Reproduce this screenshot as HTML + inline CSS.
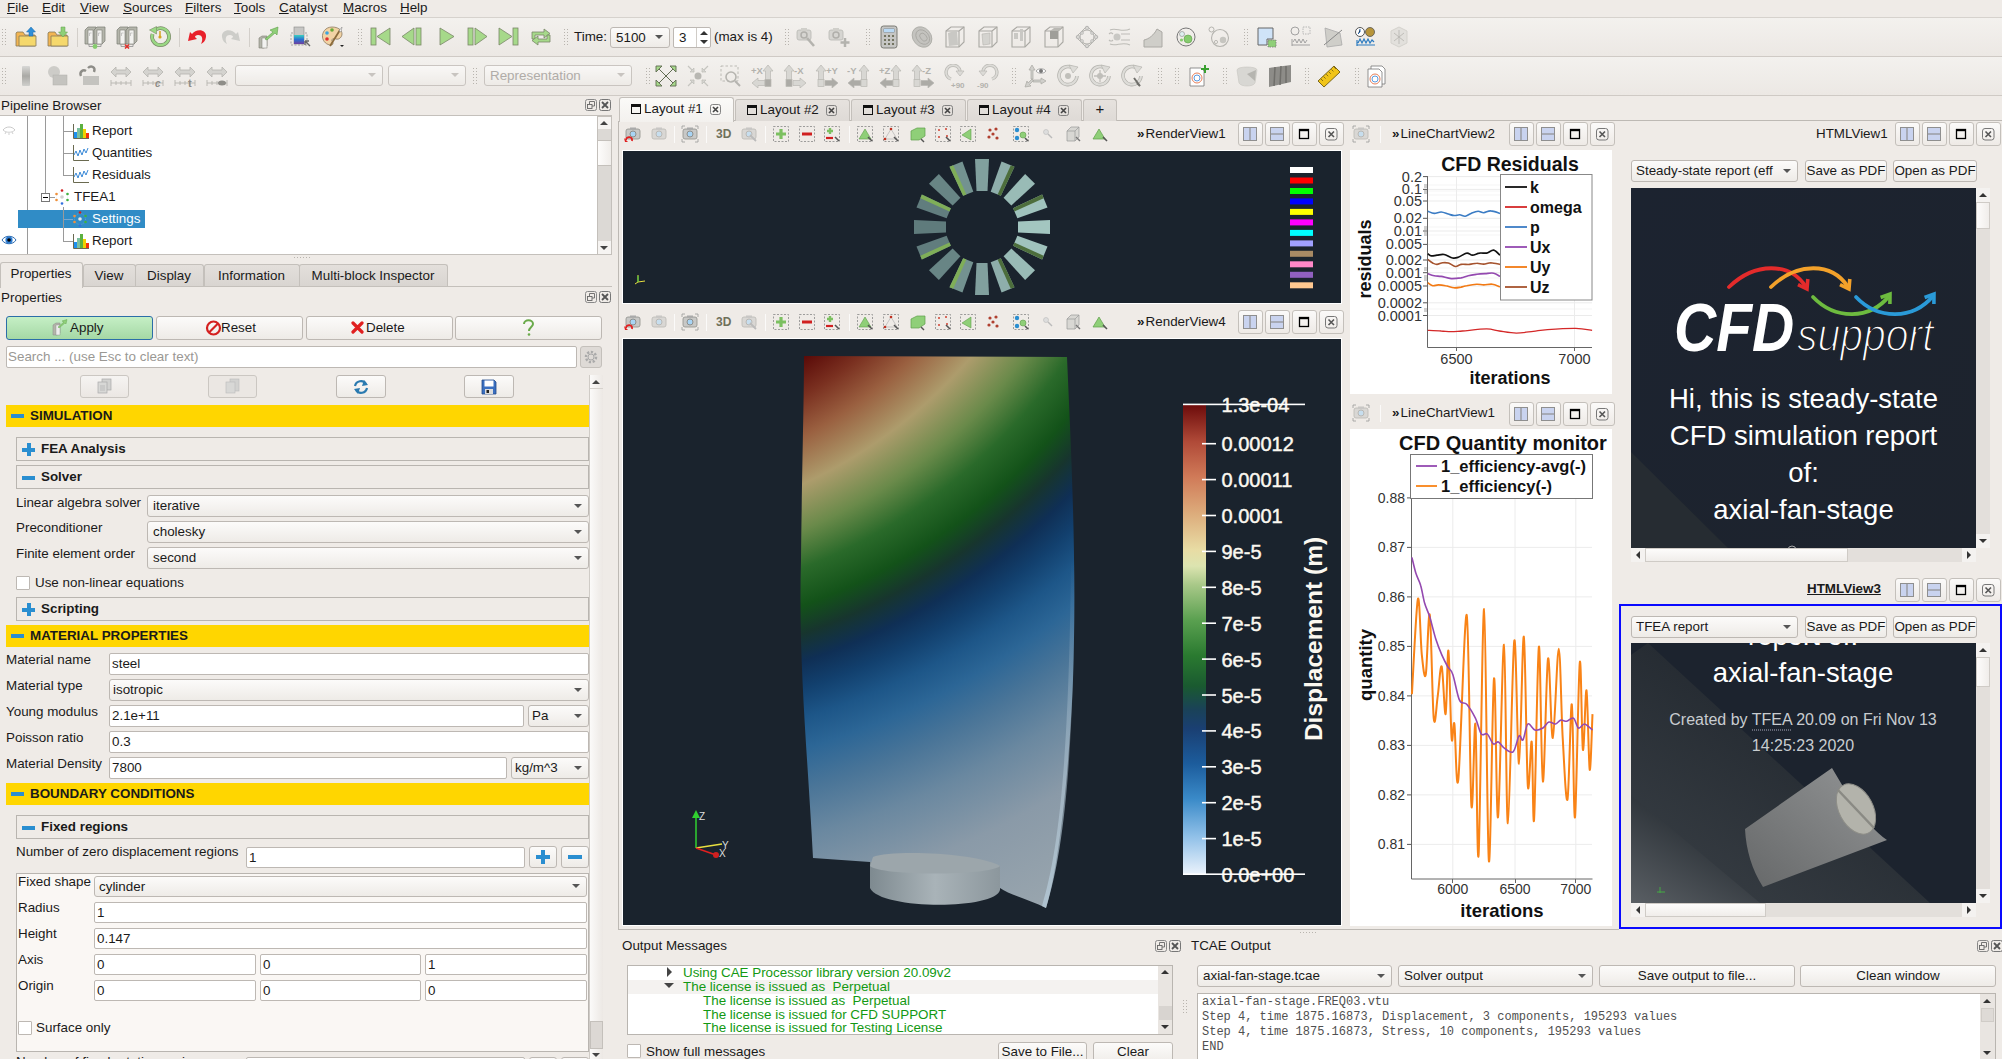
<!DOCTYPE html>
<html><head><meta charset="utf-8"><style>
html,body{margin:0;padding:0;}
body{width:2002px;height:1059px;overflow:hidden;position:relative;background:#efebe7;font-family:"Liberation Sans",sans-serif;color:#1a1a1a;}
body>div,body>svg{position:absolute;box-sizing:content-box;}
.t{white-space:pre;font-size:13.4px;}
.btn{border:1px solid #bdb8b3;border-radius:3px;background:linear-gradient(#fcfbfa,#eeebe7);}
.inp{border:1px solid #bdb8b3;border-radius:2px;background:#fff;}
u{text-decoration:underline;text-underline-offset:1px;}
</style></head><body>
<svg width="0" height="0" style="position:absolute"><defs>
<linearGradient id="cmg" x1="0" y1="0" x2="0" y2="1"><stop offset="0" stop-color="#3ad0c0"/><stop offset="0.5" stop-color="#2a70d0"/><stop offset="1" stop-color="#7040a0"/></linearGradient>
<linearGradient id="gbar" x1="0" y1="0" x2="0" y2="1"><stop offset="0" stop-color="#d8d8d6"/><stop offset="0.5" stop-color="#aaa9a5"/><stop offset="1" stop-color="#cfcfcc"/></linearGradient>
</defs></svg>
<div class="t" style="left:7px;top:0px;height:16px;line-height:16px;font-size:13.4px"><u>F</u>ile</div>
<div class="t" style="left:42px;top:0px;height:16px;line-height:16px;font-size:13.4px"><u>E</u>dit</div>
<div class="t" style="left:80px;top:0px;height:16px;line-height:16px;font-size:13.4px"><u>V</u>iew</div>
<div class="t" style="left:123px;top:0px;height:16px;line-height:16px;font-size:13.4px"><u>S</u>ources</div>
<div class="t" style="left:185px;top:0px;height:16px;line-height:16px;font-size:13.4px"><u>F</u>ilters</div>
<div class="t" style="left:234px;top:0px;height:16px;line-height:16px;font-size:13.4px"><u>T</u>ools</div>
<div class="t" style="left:279px;top:0px;height:16px;line-height:16px;font-size:13.4px"><u>C</u>atalyst</div>
<div class="t" style="left:343px;top:0px;height:16px;line-height:16px;font-size:13.4px"><u>M</u>acros</div>
<div class="t" style="left:400px;top:0px;height:16px;line-height:16px;font-size:13.4px"><u>H</u>elp</div>
<div style="left:0px;top:17px;width:2002px;height:1px;background:#d6d2cd"></div>
<div style="left:0px;top:56px;width:2002px;height:1px;background:#cfcac5"></div>
<div style="left:0px;top:95px;width:2002px;height:1px;background:#cfcac5"></div>
<div style="left:0px;top:18px;width:2002px;height:38px;background:linear-gradient(#f3f1ee,#ece8e4)"></div>
<div style="left:0px;top:57px;width:2002px;height:38px;background:linear-gradient(#f3f1ee,#ece8e4)"></div>
<div style="left:2px;top:29px;width:1px;height:1px;background:#b8b4ae"></div>
<div style="left:5px;top:29px;width:1px;height:1px;background:#b8b4ae"></div>
<div style="left:2px;top:32px;width:1px;height:1px;background:#b8b4ae"></div>
<div style="left:5px;top:32px;width:1px;height:1px;background:#b8b4ae"></div>
<div style="left:2px;top:35px;width:1px;height:1px;background:#b8b4ae"></div>
<div style="left:5px;top:35px;width:1px;height:1px;background:#b8b4ae"></div>
<div style="left:2px;top:38px;width:1px;height:1px;background:#b8b4ae"></div>
<div style="left:5px;top:38px;width:1px;height:1px;background:#b8b4ae"></div>
<div style="left:2px;top:41px;width:1px;height:1px;background:#b8b4ae"></div>
<div style="left:5px;top:41px;width:1px;height:1px;background:#b8b4ae"></div>
<div style="left:2px;top:44px;width:1px;height:1px;background:#b8b4ae"></div>
<div style="left:5px;top:44px;width:1px;height:1px;background:#b8b4ae"></div>
<svg style="left:14px;top:25px;" width="24" height="24" viewBox="0 0 24 24"><path d="M2 8 L2 21 L21 21 L21 10 L11 10 L9 7 L3 7 Z" fill="#f2b552" stroke="#857a5a" stroke-width="0.8"/><path d="M5 11 L22 11 L22 21 L5 21 Z" fill="#f5d86c" stroke="#857a5a" stroke-width="0.8"/><path d="M17 2 L21.5 7 L19 7 L19 11 L15 11 L15 7 L12.5 7 Z" fill="#2f8fd8" stroke="#1f6aa8" stroke-width="0.5"/></svg>
<svg style="left:46px;top:25px;" width="24" height="24" viewBox="0 0 24 24"><path d="M2 8 L2 21 L21 21 L21 10 L11 10 L9 7 L3 7 Z" fill="#f2b552" stroke="#857a5a" stroke-width="0.8"/><path d="M5 11 L22 11 L22 21 L5 21 Z" fill="#f5d86c" stroke="#857a5a" stroke-width="0.8"/><path d="M15 2 L19 2 L19 7 L21.5 7 L17 12 L12.5 7 L15 7 Z" fill="#8fcf78" stroke="#5e9e4a" stroke-width="0.5"/></svg>
<div style="left:77px;top:28px;width:1px;height:19px;background:#d3cfca"></div>
<svg style="left:84px;top:25px;" width="24" height="24" viewBox="0 0 24 24"><path d="M1 5 L4 2 L12 2 L12 16 L9 19 L1 19 Z" fill="#b4b5ab" stroke="#7a7b72" stroke-width="0.7"/><rect x="4" y="5" width="5" height="14" fill="#f2f2f0" stroke="#7a7b72" stroke-width="0.6"/><path d="M5.5 8 L5.5 11 M5.5 8 L7.5 8" stroke="#aaa" stroke-width="0.6"/><path d="M10 5 L13 2 L21 2 L21 16 L18 19 L10 19 Z" fill="#b4b5ab" stroke="#7a7b72" stroke-width="0.7"/><rect x="13" y="5" width="5" height="14" fill="#f2f2f0" stroke="#7a7b72" stroke-width="0.6"/><path d="M14.5 8 L14.5 11 M14.5 8 L16.5 8" stroke="#aaa" stroke-width="0.6"/><path d="M5 19 L5 21.5 L17 21.5 L17 19" fill="none" stroke="#999" stroke-width="0.9"/><circle cx="11" cy="21.5" r="2.4" fill="#86cc6e"/></svg>
<svg style="left:116px;top:25px;" width="24" height="24" viewBox="0 0 24 24"><path d="M1 5 L4 2 L12 2 L12 16 L9 19 L1 19 Z" fill="#b4b5ab" stroke="#7a7b72" stroke-width="0.7"/><rect x="4" y="5" width="5" height="14" fill="#f2f2f0" stroke="#7a7b72" stroke-width="0.6"/><path d="M5.5 8 L5.5 11 M5.5 8 L7.5 8" stroke="#aaa" stroke-width="0.6"/><path d="M10 5 L13 2 L21 2 L21 16 L18 19 L10 19 Z" fill="#b4b5ab" stroke="#7a7b72" stroke-width="0.7"/><rect x="13" y="5" width="5" height="14" fill="#f2f2f0" stroke="#7a7b72" stroke-width="0.6"/><path d="M14.5 8 L14.5 11 M14.5 8 L16.5 8" stroke="#aaa" stroke-width="0.6"/><path d="M5 19 L5 21.5 L17 21.5 L17 19" fill="none" stroke="#999" stroke-width="0.9"/><path d="M9 19.5 L13 23.5 M13 19.5 L9 23.5" stroke="#e0302a" stroke-width="1.6"/></svg>
<svg style="left:148px;top:25px;" width="24" height="24" viewBox="0 0 24 24"><path d="M4.5 9 A8.5 8.5 0 1 0 8 4.5" fill="none" stroke="#7a8a68" stroke-width="3.8"/><path d="M4.5 9 A8.5 8.5 0 1 0 8 4.5" fill="none" stroke="#9ad884" stroke-width="2.4"/><path d="M1.5 5 L8.5 1.5 L8.5 9 Z" fill="#9ad884" stroke="#7a8a68" stroke-width="0.6"/><path d="M12 6 L12 12" stroke="#d3a520" stroke-width="1.5"/><circle cx="12" cy="12" r="1.6" fill="#d3a520"/></svg>
<div style="left:179px;top:28px;width:1px;height:19px;background:#d3cfca"></div>
<svg style="left:186px;top:25px;" width="24" height="24" viewBox="0 0 24 24"><path d="M6 9 C10 3 21 4 20 12 C19.5 16 17 18 15 19 C17 15 17 10 12 10 C10 10 9 11 9 12 L11 14 L2 16 L4 7 Z" fill="#e8202a"/></svg>
<svg style="left:218px;top:25px;" width="24" height="24" viewBox="0 0 24 24"><g transform="translate(24,0) scale(-1,1)"><path d="M6 9 C10 3 21 4 20 12 C19.5 16 17 18 15 19 C17 15 17 10 12 10 C10 10 9 11 9 12 L11 14 L2 16 L4 7 Z" fill="#cdcdc9"/></g></svg>
<div style="left:249px;top:28px;width:1px;height:19px;background:#d3cfca"></div>
<svg style="left:256px;top:25px;" width="24" height="24" viewBox="0 0 24 24"><path d="M3 13 L6 11 L11 11 L11 21 L8 23 L3 23 Z" fill="#b4b5aa" stroke="#7d7d74" stroke-width="0.6"/><rect x="6" y="13" width="5" height="10" fill="#f2f2f0" stroke="#7d7d74" stroke-width="0.5"/><path d="M9 14 L17 7 L14 5 L22 2 L21 10 L19 8 L11 15 Z" fill="#8fcf78" stroke="#5e9e4a" stroke-width="0.6"/></svg>
<svg style="left:288px;top:25px;" width="24" height="24" viewBox="0 0 24 24"><rect x="3" y="8" width="16" height="12" fill="none" stroke="#999" stroke-width="0.9" stroke-dasharray="2 1.5"/><rect x="6" y="2" width="10" height="17" fill="#c6c6c4" stroke="#888" stroke-width="0.6"/><rect x="6" y="10" width="10" height="9" fill="url(#cmg)"/><path d="M17 16 L22 21 M17 16 L17 20 M17 16 L21 16" stroke="#666" stroke-width="1.4"/></svg>
<svg style="left:321px;top:25px;" width="24" height="24" viewBox="0 0 24 24"><path d="M11 2 C4 2 1 8 1.5 12 C2 17 6 20 10 20 C13 20 12 17 11 16 C10 14 13 13 15 14 C18 15 21 12 21 9 C21 5 17 2 11 2 Z" fill="#f2d3a4" stroke="#7d6a50" stroke-width="0.7"/><circle cx="6" cy="8" r="1.8" fill="#3aa3e0"/><circle cx="11" cy="5" r="1.8" fill="#6aaa3a"/><circle cx="6" cy="14" r="1.8" fill="#e03030"/><path d="M9 21 L19 5" stroke="#8a6a3a" stroke-width="1.8"/><path d="M18 6 L21 2 L20 7 Z" fill="#fff" stroke="#777" stroke-width="0.5"/><path d="M19 20 L23 20 L21 22 Z" fill="#222"/></svg>
<div style="left:358px;top:29px;width:1px;height:1px;background:#b8b4ae"></div>
<div style="left:361px;top:29px;width:1px;height:1px;background:#b8b4ae"></div>
<div style="left:358px;top:32px;width:1px;height:1px;background:#b8b4ae"></div>
<div style="left:361px;top:32px;width:1px;height:1px;background:#b8b4ae"></div>
<div style="left:358px;top:35px;width:1px;height:1px;background:#b8b4ae"></div>
<div style="left:361px;top:35px;width:1px;height:1px;background:#b8b4ae"></div>
<div style="left:358px;top:38px;width:1px;height:1px;background:#b8b4ae"></div>
<div style="left:361px;top:38px;width:1px;height:1px;background:#b8b4ae"></div>
<div style="left:358px;top:41px;width:1px;height:1px;background:#b8b4ae"></div>
<div style="left:361px;top:41px;width:1px;height:1px;background:#b8b4ae"></div>
<div style="left:358px;top:44px;width:1px;height:1px;background:#b8b4ae"></div>
<div style="left:361px;top:44px;width:1px;height:1px;background:#b8b4ae"></div>
<svg style="left:369px;top:25px;" width="24" height="24" viewBox="0 0 24 24"><rect x="2" y="3" width="5" height="17" fill="#a6d98a" stroke="#7a8768" stroke-width="0.8"/><path d="M8 11.5 L21 3 L21 20 Z" fill="#a6d98a" stroke="#7a8768" stroke-width="0.8"/></svg>
<svg style="left:401px;top:25px;" width="24" height="24" viewBox="0 0 24 24"><path d="M1 11.5 L13 3 L13 20 Z" fill="#a6d98a" stroke="#7a8768" stroke-width="0.8"/><rect x="15" y="3" width="5" height="17" fill="#a6d98a" stroke="#7a8768" stroke-width="0.8"/></svg>
<svg style="left:434px;top:25px;" width="24" height="24" viewBox="0 0 24 24"><path d="M6 3 L20 11.5 L6 20 Z" fill="#a6d98a" stroke="#7a8768" stroke-width="0.8"/></svg>
<svg style="left:465px;top:25px;" width="24" height="24" viewBox="0 0 24 24"><rect x="3" y="3" width="5" height="17" fill="#a6d98a" stroke="#7a8768" stroke-width="0.8"/><path d="M10 3 L22 11.5 L10 20 Z" fill="#a6d98a" stroke="#7a8768" stroke-width="0.8"/></svg>
<svg style="left:497px;top:25px;" width="24" height="24" viewBox="0 0 24 24"><path d="M2 3 L15 11.5 L2 20 Z" fill="#a6d98a" stroke="#7a8768" stroke-width="0.8"/><rect x="16" y="3" width="5" height="17" fill="#a6d98a" stroke="#7a8768" stroke-width="0.8"/></svg>
<svg style="left:529px;top:25px;" width="24" height="24" viewBox="0 0 24 24"><path d="M3 14 L3 7 L15 7 L15 4 L21 8.5 L15 13 L15 10 L6 10 L6 14 Z" fill="#a6d98a" stroke="#7a8768" stroke-width="0.8"/><path d="M21 10 L21 17 L9 17 L9 20 L3 15.5 L9 11 L9 14 L18 14 L18 10 Z" fill="#a6d98a" stroke="#7a8768" stroke-width="0.8"/></svg>
<div style="left:564px;top:29px;width:1px;height:1px;background:#b8b4ae"></div>
<div style="left:567px;top:29px;width:1px;height:1px;background:#b8b4ae"></div>
<div style="left:564px;top:32px;width:1px;height:1px;background:#b8b4ae"></div>
<div style="left:567px;top:32px;width:1px;height:1px;background:#b8b4ae"></div>
<div style="left:564px;top:35px;width:1px;height:1px;background:#b8b4ae"></div>
<div style="left:567px;top:35px;width:1px;height:1px;background:#b8b4ae"></div>
<div style="left:564px;top:38px;width:1px;height:1px;background:#b8b4ae"></div>
<div style="left:567px;top:38px;width:1px;height:1px;background:#b8b4ae"></div>
<div style="left:564px;top:41px;width:1px;height:1px;background:#b8b4ae"></div>
<div style="left:567px;top:41px;width:1px;height:1px;background:#b8b4ae"></div>
<div style="left:564px;top:44px;width:1px;height:1px;background:#b8b4ae"></div>
<div style="left:567px;top:44px;width:1px;height:1px;background:#b8b4ae"></div>
<div class="t" style="left:574px;top:29px;height:16px;line-height:16px;font-size:13.4px">Time:</div>
<div class="btn" style="left:610px;top:27px;width:58px;height:19px;"></div>
<div class="t" style="left:616px;top:27px;height:21px;line-height:21px;font-size:13.4px;left:616px">5100</div>
<svg style="left:654px;top:34px;" width="10" height="6" viewBox="0 0 10 6"><path d="M1 1 L9 1 L5 5 Z" fill="#555"/></svg>
<div class="inp" style="left:673px;top:27px;width:36px;height:19px;"></div>
<div class="t" style="left:679px;top:27px;height:21px;line-height:21px;font-size:13.4px">3</div>
<div style="left:696px;top:28px;width:1px;height:19px;background:#d0ccc7"></div>
<svg style="left:698px;top:29px;" width="12" height="17" viewBox="0 0 12 17"><path d="M2 6 L6 2 L10 6 Z M2 11 L6 15 L10 11 Z" fill="#333"/></svg>
<div class="t" style="left:714px;top:29px;height:16px;line-height:16px;font-size:13.4px">(max is 4)</div>
<div style="left:785px;top:29px;width:1px;height:1px;background:#b8b4ae"></div>
<div style="left:788px;top:29px;width:1px;height:1px;background:#b8b4ae"></div>
<div style="left:785px;top:32px;width:1px;height:1px;background:#b8b4ae"></div>
<div style="left:788px;top:32px;width:1px;height:1px;background:#b8b4ae"></div>
<div style="left:785px;top:35px;width:1px;height:1px;background:#b8b4ae"></div>
<div style="left:788px;top:35px;width:1px;height:1px;background:#b8b4ae"></div>
<div style="left:785px;top:38px;width:1px;height:1px;background:#b8b4ae"></div>
<div style="left:788px;top:38px;width:1px;height:1px;background:#b8b4ae"></div>
<div style="left:785px;top:41px;width:1px;height:1px;background:#b8b4ae"></div>
<div style="left:788px;top:41px;width:1px;height:1px;background:#b8b4ae"></div>
<div style="left:785px;top:44px;width:1px;height:1px;background:#b8b4ae"></div>
<div style="left:788px;top:44px;width:1px;height:1px;background:#b8b4ae"></div>
<svg style="left:795px;top:25px;" width="24" height="24" viewBox="0 0 24 24"><rect x="2" y="5" width="14" height="10" rx="2" fill="#d6d5d1" stroke="#b8b7b2" stroke-width="0.8"/><rect x="6" y="3" width="6" height="3" fill="#d0cfca"/><circle cx="9" cy="10" r="3" fill="none" stroke="#b0afaa" stroke-width="1.5"/><path d="M12 13 L19 21" stroke="#b4b3ae" stroke-width="2.5"/></svg>
<svg style="left:827px;top:25px;" width="24" height="24" viewBox="0 0 24 24"><rect x="2" y="5" width="14" height="10" rx="2" fill="#d6d5d1" stroke="#b8b7b2" stroke-width="0.8"/><rect x="6" y="3" width="6" height="3" fill="#d0cfca"/><circle cx="9" cy="10" r="3" fill="none" stroke="#b0afaa" stroke-width="1.5"/><path d="M18 13 L18 22 M13.5 17.5 L22.5 17.5" stroke="#b4b3ae" stroke-width="2.5"/></svg>
<div style="left:866px;top:29px;width:1px;height:1px;background:#b8b4ae"></div>
<div style="left:869px;top:29px;width:1px;height:1px;background:#b8b4ae"></div>
<div style="left:866px;top:32px;width:1px;height:1px;background:#b8b4ae"></div>
<div style="left:869px;top:32px;width:1px;height:1px;background:#b8b4ae"></div>
<div style="left:866px;top:35px;width:1px;height:1px;background:#b8b4ae"></div>
<div style="left:869px;top:35px;width:1px;height:1px;background:#b8b4ae"></div>
<div style="left:866px;top:38px;width:1px;height:1px;background:#b8b4ae"></div>
<div style="left:869px;top:38px;width:1px;height:1px;background:#b8b4ae"></div>
<div style="left:866px;top:41px;width:1px;height:1px;background:#b8b4ae"></div>
<div style="left:869px;top:41px;width:1px;height:1px;background:#b8b4ae"></div>
<div style="left:866px;top:44px;width:1px;height:1px;background:#b8b4ae"></div>
<div style="left:869px;top:44px;width:1px;height:1px;background:#b8b4ae"></div>
<svg style="left:877px;top:25px;" width="24" height="24" viewBox="0 0 24 24"><rect x="4" y="1" width="16" height="22" rx="2.5" fill="#c6c6c4" stroke="#6f706a" stroke-width="0.9"/><rect x="6.5" y="3.5" width="11" height="4" rx="1" fill="#b9d9f4" stroke="#6f706a" stroke-width="0.4"/><circle cx="8" cy="11" r="1.1" fill="#5f6048"/><circle cx="8" cy="15" r="1.1" fill="#5f6048"/><circle cx="8" cy="19" r="1.1" fill="#5f6048"/><circle cx="12" cy="11" r="1.1" fill="#5f6048"/><circle cx="12" cy="15" r="1.1" fill="#5f6048"/><circle cx="12" cy="19" r="1.1" fill="#5f6048"/><circle cx="16" cy="11" r="1.1" fill="#5f6048"/><circle cx="16" cy="15" r="1.1" fill="#5f6048"/><circle cx="16" cy="19" r="1.1" fill="#5f6048"/></svg>
<svg style="left:910px;top:25px;" width="24" height="24" viewBox="0 0 24 24"><ellipse cx="12" cy="12" rx="9" ry="11" transform="rotate(-40 12 12)" fill="#c4c3bf" stroke="#a9a8a3" stroke-width="0.8"/><ellipse cx="12.5" cy="12.5" rx="6" ry="8" transform="rotate(-40 12 12)" fill="none" stroke="#aaa9a4" stroke-width="0.9"/><ellipse cx="13" cy="13" rx="3" ry="4.5" transform="rotate(-40 12 12)" fill="none" stroke="#aaa9a4" stroke-width="0.9"/></svg>
<svg style="left:943px;top:25px;" width="24" height="24" viewBox="0 0 24 24"><path d="M3 6 L8 2 L21 2 L21 17 L16 22 L3 22 Z" fill="none" stroke="#a9a8a3" stroke-width="1.1"/><path d="M3 6 L16 6 L16 22 M16 6 L21 2" fill="none" stroke="#a9a8a3" stroke-width="1.1"/><path d="M5 8 L14 5 L15 20 L6 21 Z" fill="#c9c8c4"/></svg>
<svg style="left:976px;top:25px;" width="24" height="24" viewBox="0 0 24 24"><path d="M3 6 L8 2 L21 2 L21 17 L16 22 L3 22 Z" fill="none" stroke="#a9a8a3" stroke-width="1.1"/><path d="M3 6 L16 6 L16 22 M16 6 L21 2" fill="none" stroke="#a9a8a3" stroke-width="1.1"/><path d="M6 9 L14 8 L14 19 L7 20 Z" fill="#d4d3cf" stroke="#b5b4af" stroke-width="0.6"/></svg>
<svg style="left:1009px;top:25px;" width="24" height="24" viewBox="0 0 24 24"><path d="M3 6 L8 2 L21 2 L21 17 L16 22 L3 22 Z" fill="none" stroke="#a9a8a3" stroke-width="1.1"/><path d="M3 6 L16 6 L16 22 M16 6 L21 2" fill="none" stroke="#a9a8a3" stroke-width="1.1"/><path d="M5 8 L9 8 L9 14 L5 14 Z M11 4 L14 4 L14 16 L11 16 Z" fill="#c9c8c4"/></svg>
<svg style="left:1042px;top:25px;" width="24" height="24" viewBox="0 0 24 24"><path d="M3 6 L8 2 L21 2 L21 17 L16 22 L3 22 Z" fill="none" stroke="#a9a8a3" stroke-width="1.1"/><path d="M3 6 L16 6 L16 22 M16 6 L21 2" fill="none" stroke="#a9a8a3" stroke-width="1.1"/><path d="M8 6 L16 6 L16 14 L8 14 Z" fill="#9f9e99"/><path d="M8 6 L12 3 L20 3 L16 6 Z" fill="#b9b8b3"/></svg>
<svg style="left:1075px;top:25px;" width="24" height="24" viewBox="0 0 24 24"><circle cx="12" cy="12" r="7" fill="none" stroke="#b5b4af" stroke-width="1.2"/><path d="M12 1 L23 12 L12 23 L1 12 Z" fill="none" stroke="#b5b4af" stroke-width="1"/><circle cx="12" cy="3" r="1.8" fill="#d6d5d1" stroke="#aaa" stroke-width="0.6"/><circle cx="12" cy="21" r="1.8" fill="#d6d5d1" stroke="#aaa" stroke-width="0.6"/><circle cx="3" cy="12" r="1.8" fill="#d6d5d1" stroke="#aaa" stroke-width="0.6"/><circle cx="21" cy="12" r="1.8" fill="#d6d5d1" stroke="#aaa" stroke-width="0.6"/><circle cx="7" cy="8" r="1.5" fill="#d6d5d1" stroke="#aaa" stroke-width="0.5"/><circle cx="17" cy="8" r="1.5" fill="#d6d5d1" stroke="#aaa" stroke-width="0.5"/><circle cx="7" cy="16" r="1.5" fill="#d6d5d1" stroke="#aaa" stroke-width="0.5"/><circle cx="17" cy="16" r="1.5" fill="#d6d5d1" stroke="#aaa" stroke-width="0.5"/></svg>
<svg style="left:1108px;top:25px;" width="24" height="24" viewBox="0 0 24 24"><circle cx="9" cy="12" r="3.5" fill="#c9c8c4"/><path d="M2 5 C8 2 14 8 22 4 M2 19 C8 22 14 16 22 20 M13 9 L22 9 M13 15 L22 15 M1 9 C3 7 4 8 5 9 M1 15 C3 17 4 16 5 15" fill="none" stroke="#bdbcb7" stroke-width="1.1"/></svg>
<svg style="left:1141px;top:25px;" width="24" height="24" viewBox="0 0 24 24"><path d="M3 22 L3 15 C8 14 13 10 16 4 L21 7 L21 22 Z" fill="#cfcec9" stroke="#aaa9a4" stroke-width="1"/></svg>
<svg style="left:1174px;top:25px;" width="24" height="24" viewBox="0 0 24 24"><circle cx="12" cy="12" r="9" fill="none" stroke="#777" stroke-width="1"/><circle cx="8" cy="9" r="2.5" fill="#dff0f0" stroke="#888" stroke-width="0.6"/><circle cx="14" cy="14" r="4" fill="#86cc6e" stroke="#5e9e4a" stroke-width="0.6"/><circle cx="7.5" cy="15" r="1.6" fill="#86cc6e"/></svg>
<svg style="left:1207px;top:25px;" width="24" height="24" viewBox="0 0 24 24"><circle cx="13" cy="13" r="8.5" fill="none" stroke="#b5b4af" stroke-width="1.1"/><circle cx="4.5" cy="4.5" r="2.5" fill="none" stroke="#b5b4af" stroke-width="1"/><circle cx="16" cy="15" r="3.2" fill="#c6c5c0"/><circle cx="9" cy="17" r="1.6" fill="none" stroke="#b5b4af" stroke-width="0.9"/></svg>
<div style="left:1244px;top:29px;width:1px;height:1px;background:#b8b4ae"></div>
<div style="left:1247px;top:29px;width:1px;height:1px;background:#b8b4ae"></div>
<div style="left:1244px;top:32px;width:1px;height:1px;background:#b8b4ae"></div>
<div style="left:1247px;top:32px;width:1px;height:1px;background:#b8b4ae"></div>
<div style="left:1244px;top:35px;width:1px;height:1px;background:#b8b4ae"></div>
<div style="left:1247px;top:35px;width:1px;height:1px;background:#b8b4ae"></div>
<div style="left:1244px;top:38px;width:1px;height:1px;background:#b8b4ae"></div>
<div style="left:1247px;top:38px;width:1px;height:1px;background:#b8b4ae"></div>
<div style="left:1244px;top:41px;width:1px;height:1px;background:#b8b4ae"></div>
<div style="left:1247px;top:41px;width:1px;height:1px;background:#b8b4ae"></div>
<div style="left:1244px;top:44px;width:1px;height:1px;background:#b8b4ae"></div>
<div style="left:1247px;top:44px;width:1px;height:1px;background:#b8b4ae"></div>
<svg style="left:1255px;top:25px;" width="24" height="24" viewBox="0 0 24 24"><path d="M3 3 L18 3 L18 14 L12 14 L12 20 L3 20 Z" fill="#cfe3f8" stroke="#666" stroke-width="1"/><rect x="13" y="15" width="8" height="7" fill="#8fcf78" stroke="#777" stroke-dasharray="1.5 1" stroke-width="0.8"/></svg>
<svg style="left:1289px;top:25px;" width="24" height="24" viewBox="0 0 24 24"><circle cx="6" cy="6" r="4" fill="none" stroke="#999" stroke-width="0.9"/><rect x="14" y="2" width="7" height="7" fill="none" stroke="#aaa" stroke-dasharray="1.5 1" stroke-width="0.8"/><path d="M3 21 L3 14 M3 20 L21 20 M4 17 L6 14 L8 18 L10 14 L12 18 L14 14 L16 18 L18 15" fill="none" stroke="#999" stroke-width="0.9"/></svg>
<svg style="left:1321px;top:25px;" width="24" height="24" viewBox="0 0 24 24"><path d="M4 3 L19 8 L21 20 L6 22 Z" fill="#cfcec9" stroke="#aaa" stroke-width="0.8"/><path d="M3 20 L21 5" stroke="#888" stroke-width="1"/></svg>
<svg style="left:1354px;top:25px;" width="24" height="24" viewBox="0 0 24 24"><circle cx="6" cy="7" r="4.5" fill="#fff" stroke="#555" stroke-width="1"/><path d="M6 4 L6 7 L4 9" stroke="#2a6ab0" stroke-width="1"/><circle cx="16" cy="7" r="4.5" fill="#b8953a" stroke="#555" stroke-width="0.8"/><path d="M3 21 L3 15 M3 20 L21 20 M4 18 L6 14 L8 18 L10 14 L12 18 L14 14 L16 18 L18 15 L20 17" fill="none" stroke="#2a7ac0" stroke-width="1.2"/></svg>
<svg style="left:1387px;top:25px;" width="24" height="24" viewBox="0 0 24 24"><path d="M4 6 L12 2 L20 6 L20 18 L12 22 L4 18 Z" fill="#e2e0dc" stroke="#d4d2cd" stroke-width="1"/><path d="M7 8 L17 16 M17 8 L7 16 M12 5 L12 19" stroke="#b5b4af" stroke-width="0.8"/></svg>
<div style="left:2px;top:68px;width:1px;height:1px;background:#b8b4ae"></div>
<div style="left:5px;top:68px;width:1px;height:1px;background:#b8b4ae"></div>
<div style="left:2px;top:71px;width:1px;height:1px;background:#b8b4ae"></div>
<div style="left:5px;top:71px;width:1px;height:1px;background:#b8b4ae"></div>
<div style="left:2px;top:74px;width:1px;height:1px;background:#b8b4ae"></div>
<div style="left:5px;top:74px;width:1px;height:1px;background:#b8b4ae"></div>
<div style="left:2px;top:77px;width:1px;height:1px;background:#b8b4ae"></div>
<div style="left:5px;top:77px;width:1px;height:1px;background:#b8b4ae"></div>
<div style="left:2px;top:80px;width:1px;height:1px;background:#b8b4ae"></div>
<div style="left:5px;top:80px;width:1px;height:1px;background:#b8b4ae"></div>
<div style="left:2px;top:83px;width:1px;height:1px;background:#b8b4ae"></div>
<div style="left:5px;top:83px;width:1px;height:1px;background:#b8b4ae"></div>
<svg style="left:14px;top:64px;" width="24" height="24" viewBox="0 0 24 24"><rect x="8" y="2" width="8" height="20" rx="1" fill="url(#gbar)"/></svg>
<svg style="left:45px;top:64px;" width="24" height="24" viewBox="0 0 24 24"><circle cx="9" cy="8" r="6" fill="#cdccc8"/><rect x="8" y="11" width="14" height="10" fill="#c4c3bf" stroke="#b0afaa" stroke-width="0.5"/></svg>
<svg style="left:77px;top:64px;" width="24" height="24" viewBox="0 0 24 24"><rect x="6" y="12" width="16" height="9" fill="#c4c3bf"/><path d="M4 12 C2 8 6 5 9 7 M11 4 C14 1 19 3 17 8" fill="none" stroke="#8e8d88" stroke-width="2.4"/></svg>
<svg style="left:109px;top:64px;" width="24" height="24" viewBox="0 0 24 24"><path d="M2 8 L7 3 L7 6 L17 6 L17 3 L22 8 L17 13 L17 10 L7 10 L7 13 Z" fill="#d4d3cf" stroke="#b5b4af" stroke-width="0.8"/><path d="M2 16 L2 22 M2 19 L22 19 M7 17 L7 21 M12 17 L12 21 M17 17 L17 21 M22 16 L22 22" stroke="#b5b4af" stroke-width="0.9"/></svg>
<svg style="left:141px;top:64px;" width="24" height="24" viewBox="0 0 24 24"><path d="M2 8 L7 3 L7 6 L17 6 L17 3 L22 8 L17 13 L17 10 L7 10 L7 13 Z" fill="#d4d3cf" stroke="#b5b4af" stroke-width="0.8"/><path d="M2 16 L2 22 M2 19 L22 19 M7 17 L7 21 M12 17 L12 21 M17 17 L17 21 M22 16 L22 22" stroke="#b5b4af" stroke-width="0.9"/><text x="14" y="23" font-family="Liberation Sans" font-weight="bold" font-style="italic" font-size="10" fill="#8e8d88">c</text></svg>
<svg style="left:173px;top:64px;" width="24" height="24" viewBox="0 0 24 24"><path d="M2 8 L7 3 L7 6 L17 6 L17 3 L22 8 L17 13 L17 10 L7 10 L7 13 Z" fill="#d4d3cf" stroke="#b5b4af" stroke-width="0.8"/><path d="M2 16 L2 22 M2 19 L22 19 M7 17 L7 21 M12 17 L12 21 M17 17 L17 21 M22 16 L22 22" stroke="#b5b4af" stroke-width="0.9"/><text x="15" y="23" font-family="Liberation Sans" font-weight="bold" font-size="11" fill="#8e8d88">t</text></svg>
<svg style="left:205px;top:64px;" width="24" height="24" viewBox="0 0 24 24"><path d="M2 8 L7 3 L7 6 L17 6 L17 3 L22 8 L17 13 L17 10 L7 10 L7 13 Z" fill="#d4d3cf" stroke="#b5b4af" stroke-width="0.8"/><path d="M2 16 L2 22 M2 19 L22 19 M7 17 L7 21 M12 17 L12 21 M17 17 L17 21 M22 16 L22 22" stroke="#b5b4af" stroke-width="0.9"/><ellipse cx="17" cy="19" rx="4" ry="2.5" fill="#8e8d88"/></svg>
<div class="btn" style="left:235px;top:65px;width:146px;height:19px;opacity:0.75"></div>
<svg style="left:367px;top:72px;" width="10" height="6" viewBox="0 0 10 6"><path d="M1 1 L9 1 L5 5 Z" fill="#c8c4c0"/></svg>
<div class="btn" style="left:388px;top:65px;width:76px;height:19px;opacity:0.75"></div>
<svg style="left:450px;top:72px;" width="10" height="6" viewBox="0 0 10 6"><path d="M1 1 L9 1 L5 5 Z" fill="#c8c4c0"/></svg>
<div style="left:473px;top:68px;width:1px;height:1px;background:#b8b4ae"></div>
<div style="left:476px;top:68px;width:1px;height:1px;background:#b8b4ae"></div>
<div style="left:473px;top:71px;width:1px;height:1px;background:#b8b4ae"></div>
<div style="left:476px;top:71px;width:1px;height:1px;background:#b8b4ae"></div>
<div style="left:473px;top:74px;width:1px;height:1px;background:#b8b4ae"></div>
<div style="left:476px;top:74px;width:1px;height:1px;background:#b8b4ae"></div>
<div style="left:473px;top:77px;width:1px;height:1px;background:#b8b4ae"></div>
<div style="left:476px;top:77px;width:1px;height:1px;background:#b8b4ae"></div>
<div style="left:473px;top:80px;width:1px;height:1px;background:#b8b4ae"></div>
<div style="left:476px;top:80px;width:1px;height:1px;background:#b8b4ae"></div>
<div style="left:473px;top:83px;width:1px;height:1px;background:#b8b4ae"></div>
<div style="left:476px;top:83px;width:1px;height:1px;background:#b8b4ae"></div>
<div class="btn" style="left:484px;top:65px;width:146px;height:19px;opacity:0.75"></div>
<div class="t" style="left:490px;top:65px;height:21px;line-height:21px;font-size:13.4px;color:#b0aca8">Representation</div>
<svg style="left:616px;top:72px;" width="10" height="6" viewBox="0 0 10 6"><path d="M1 1 L9 1 L5 5 Z" fill="#c8c4c0"/></svg>
<div style="left:646px;top:68px;width:1px;height:1px;background:#b8b4ae"></div>
<div style="left:649px;top:68px;width:1px;height:1px;background:#b8b4ae"></div>
<div style="left:646px;top:71px;width:1px;height:1px;background:#b8b4ae"></div>
<div style="left:649px;top:71px;width:1px;height:1px;background:#b8b4ae"></div>
<div style="left:646px;top:74px;width:1px;height:1px;background:#b8b4ae"></div>
<div style="left:649px;top:74px;width:1px;height:1px;background:#b8b4ae"></div>
<div style="left:646px;top:77px;width:1px;height:1px;background:#b8b4ae"></div>
<div style="left:649px;top:77px;width:1px;height:1px;background:#b8b4ae"></div>
<div style="left:646px;top:80px;width:1px;height:1px;background:#b8b4ae"></div>
<div style="left:649px;top:80px;width:1px;height:1px;background:#b8b4ae"></div>
<div style="left:646px;top:83px;width:1px;height:1px;background:#b8b4ae"></div>
<div style="left:649px;top:83px;width:1px;height:1px;background:#b8b4ae"></div>
<svg style="left:654px;top:64px;" width="24" height="24" viewBox="0 0 24 24"><path d="M2 2 L8 2 L5 5 L19 19 L22 16 L22 22 L16 22 L19 19 L5 5 L2 8 Z M22 2 L22 8 L19 5 L5 19 L8 22 L2 22 L2 16 L5 19 L19 5 L16 2 Z" fill="#a6d98a" stroke="#5f6a50" stroke-width="0.9"/></svg>
<svg style="left:686px;top:64px;" width="24" height="24" viewBox="0 0 24 24"><circle cx="12" cy="12" r="3.5" fill="#b8b7b2"/><path d="M2 2 L8 8 M22 2 L16 8 M2 22 L8 16 M22 22 L16 16" stroke="#c6c5c0" stroke-width="1.2"/><path d="M8 8 L8 4 L4 8 Z M16 8 L16 4 L20 8 Z M8 16 L8 20 L4 16 Z M16 16 L16 20 L20 16 Z" fill="#d6d5d1" stroke="#b9b8b3" stroke-width="0.6"/></svg>
<svg style="left:719px;top:64px;" width="24" height="24" viewBox="0 0 24 24"><rect x="2" y="2" width="17" height="15" fill="none" stroke="#b5b4af" stroke-width="0.9" stroke-dasharray="2.5 2"/><circle cx="12" cy="13" r="5" fill="none" stroke="#b5b4af" stroke-width="1.6"/><path d="M16 17 L21 22" stroke="#b5b4af" stroke-width="2"/></svg>
<svg style="left:751px;top:64px;" width="24" height="24" viewBox="0 0 24 24"><path d="M17 1 L22 7 L19.5 7 L19.5 16 L14.5 16 L14.5 7 L12 7 Z" fill="#d8d7d3" stroke="#b9b8b3" stroke-width="0.7"/><path d="M1 19 L7 14 L7 16.5 L14 16.5 L14 21.5 L7 21.5 L7 24 Z" fill="#d8d7d3" stroke="#b9b8b3" stroke-width="0.7"/><rect x="14" y="15.5" width="6" height="7" fill="#acaba6" stroke="#b9b8b3" stroke-width="0.7"/><text x="0" y="10" font-family="Liberation Sans" font-weight="bold" font-size="9.5" fill="#b3b2ad">+X</text></svg>
<svg style="left:783px;top:64px;" width="24" height="24" viewBox="0 0 24 24"><path d="M6 1 L11 7 L8.5 7 L8.5 16 L3.5 16 L3.5 7 L1 7 Z" fill="#d8d7d3" stroke="#b9b8b3" stroke-width="0.7"/><path d="M23 19 L17 14 L17 16.5 L10 16.5 L10 21.5 L17 21.5 L17 24 Z" fill="#d8d7d3" stroke="#b9b8b3" stroke-width="0.7"/><rect x="3" y="15.5" width="6" height="7" fill="#acaba6" stroke="#b9b8b3" stroke-width="0.7"/><text x="11" y="10" font-family="Liberation Sans" font-weight="bold" font-size="9.5" fill="#b3b2ad">-X</text></svg>
<svg style="left:815px;top:64px;" width="24" height="24" viewBox="0 0 24 24"><path d="M6 1 L11 7 L8.5 7 L8.5 16 L3.5 16 L3.5 7 L1 7 Z" fill="#d8d7d3" stroke="#b9b8b3" stroke-width="0.7"/><path d="M23 19 L17 14 L17 16.5 L10 16.5 L10 21.5 L17 21.5 L17 24 Z" fill="#acaba6" stroke="#b9b8b3" stroke-width="0.7"/><rect x="3" y="15.5" width="6" height="7" fill="#d8d7d3" stroke="#b9b8b3" stroke-width="0.7"/><text x="11" y="10" font-family="Liberation Sans" font-weight="bold" font-size="9.5" fill="#b3b2ad">+Y</text></svg>
<svg style="left:847px;top:64px;" width="24" height="24" viewBox="0 0 24 24"><path d="M17 1 L22 7 L19.5 7 L19.5 16 L14.5 16 L14.5 7 L12 7 Z" fill="#d8d7d3" stroke="#b9b8b3" stroke-width="0.7"/><path d="M1 19 L7 14 L7 16.5 L14 16.5 L14 21.5 L7 21.5 L7 24 Z" fill="#acaba6" stroke="#b9b8b3" stroke-width="0.7"/><rect x="14" y="15.5" width="6" height="7" fill="#d8d7d3" stroke="#b9b8b3" stroke-width="0.7"/><text x="0" y="10" font-family="Liberation Sans" font-weight="bold" font-size="9.5" fill="#b3b2ad">-Y</text></svg>
<svg style="left:879px;top:64px;" width="24" height="24" viewBox="0 0 24 24"><path d="M17 1 L22 7 L19.5 7 L19.5 16 L14.5 16 L14.5 7 L12 7 Z" fill="#d8d7d3" stroke="#b9b8b3" stroke-width="0.7"/><path d="M1 19 L7 14 L7 16.5 L14 16.5 L14 21.5 L7 21.5 L7 24 Z" fill="#acaba6" stroke="#b9b8b3" stroke-width="0.7"/><rect x="14" y="15.5" width="6" height="7" fill="#d8d7d3" stroke="#b9b8b3" stroke-width="0.7"/><text x="0" y="10" font-family="Liberation Sans" font-weight="bold" font-size="9.5" fill="#b3b2ad">+Z</text></svg>
<svg style="left:911px;top:64px;" width="24" height="24" viewBox="0 0 24 24"><path d="M6 1 L11 7 L8.5 7 L8.5 16 L3.5 16 L3.5 7 L1 7 Z" fill="#d8d7d3" stroke="#b9b8b3" stroke-width="0.7"/><path d="M23 19 L17 14 L17 16.5 L10 16.5 L10 21.5 L17 21.5 L17 24 Z" fill="#acaba6" stroke="#b9b8b3" stroke-width="0.7"/><rect x="3" y="15.5" width="6" height="7" fill="#d8d7d3" stroke="#b9b8b3" stroke-width="0.7"/><text x="11" y="10" font-family="Liberation Sans" font-weight="bold" font-size="9.5" fill="#b3b2ad">-Z</text></svg>
<svg style="left:943px;top:64px;" width="24" height="24" viewBox="0 0 24 24"><path d="M8 15 A7 7 0 1 1 17 7" fill="none" stroke="#b9b8b3" stroke-width="3.4"/><path d="M8 15 A7 7 0 1 1 17 7" fill="none" stroke="#dcdbd7" stroke-width="2"/><path d="M13 7 L21 7 L17 12 Z" fill="#dcdbd7" stroke="#b9b8b3" stroke-width="0.7"/><text x="8" y="24" font-family="Liberation Sans" font-weight="bold" font-size="8" fill="#b3b2ad">+90</text></svg>
<svg style="left:976px;top:64px;" width="24" height="24" viewBox="0 0 24 24"><path d="M16 15 A7 7 0 1 0 7 7" fill="none" stroke="#b9b8b3" stroke-width="3.4"/><path d="M16 15 A7 7 0 1 0 7 7" fill="none" stroke="#dcdbd7" stroke-width="2"/><path d="M11 7 L3 7 L7 12 Z" fill="#dcdbd7" stroke="#b9b8b3" stroke-width="0.7"/><text x="1" y="24" font-family="Liberation Sans" font-weight="bold" font-size="8" fill="#b3b2ad">-90</text></svg>
<div style="left:1012px;top:68px;width:1px;height:1px;background:#b8b4ae"></div>
<div style="left:1015px;top:68px;width:1px;height:1px;background:#b8b4ae"></div>
<div style="left:1012px;top:71px;width:1px;height:1px;background:#b8b4ae"></div>
<div style="left:1015px;top:71px;width:1px;height:1px;background:#b8b4ae"></div>
<div style="left:1012px;top:74px;width:1px;height:1px;background:#b8b4ae"></div>
<div style="left:1015px;top:74px;width:1px;height:1px;background:#b8b4ae"></div>
<div style="left:1012px;top:77px;width:1px;height:1px;background:#b8b4ae"></div>
<div style="left:1015px;top:77px;width:1px;height:1px;background:#b8b4ae"></div>
<div style="left:1012px;top:80px;width:1px;height:1px;background:#b8b4ae"></div>
<div style="left:1015px;top:80px;width:1px;height:1px;background:#b8b4ae"></div>
<div style="left:1012px;top:83px;width:1px;height:1px;background:#b8b4ae"></div>
<div style="left:1015px;top:83px;width:1px;height:1px;background:#b8b4ae"></div>
<svg style="left:1024px;top:64px;" width="24" height="24" viewBox="0 0 24 24"><path d="M8 1 L11 6 L9 6 L9 15 L7 15 L7 6 L5 6 Z M22 17 L17 14 L17 16 L9 16 L9 18 L17 18 L17 20 Z M1 23 L3 17 L4 19 L8 15 L9.5 16.5 L5.5 20.5 L7 22 Z" fill="#d0cfcb" stroke="#aaa9a4" stroke-width="0.7"/><path d="M12 7 C14 4 20 4 22 7 C20 10 14 10 12 7 Z" fill="#fff" stroke="#888" stroke-width="0.7"/><circle cx="17" cy="7" r="2" fill="#777"/></svg>
<svg style="left:1056px;top:64px;" width="24" height="24" viewBox="0 0 24 24"><path d="M21 12 A9 9 0 1 1 16 3.5" fill="none" stroke="#b5b4af" stroke-width="3.6"/><path d="M21 12 A9 9 0 1 1 16 3.5" fill="none" stroke="#dddcd8" stroke-width="2"/><path d="M13 1 L22 3 L17 9 Z" fill="#dddcd8" stroke="#b5b4af" stroke-width="0.7"/><circle cx="12" cy="12" r="3" fill="#c0bfba"/></svg>
<svg style="left:1088px;top:64px;" width="24" height="24" viewBox="0 0 24 24"><path d="M21 12 A9 9 0 1 1 16 3.5" fill="none" stroke="#b5b4af" stroke-width="3.6"/><path d="M21 12 A9 9 0 1 1 16 3.5" fill="none" stroke="#dddcd8" stroke-width="2"/><path d="M13 1 L22 3 L17 9 Z" fill="#dddcd8" stroke="#b5b4af" stroke-width="0.7"/><circle cx="12" cy="12" r="3" fill="#c0bfba"/><path d="M12 6 L12 18 M6 12 L18 12" stroke="#c0bfba" stroke-width="1.3"/></svg>
<svg style="left:1120px;top:64px;" width="24" height="24" viewBox="0 0 24 24"><path d="M21 12 A9 9 0 1 1 16 3.5" fill="none" stroke="#b5b4af" stroke-width="3.6"/><path d="M21 12 A9 9 0 1 1 16 3.5" fill="none" stroke="#dddcd8" stroke-width="2"/><path d="M13 1 L22 3 L17 9 Z" fill="#dddcd8" stroke="#b5b4af" stroke-width="0.7"/><path d="M14 14 L20 22 L17 19" fill="#6f6e6a" stroke="#6f6e6a" stroke-width="2"/></svg>
<div style="left:1158px;top:68px;width:1px;height:1px;background:#b8b4ae"></div>
<div style="left:1161px;top:68px;width:1px;height:1px;background:#b8b4ae"></div>
<div style="left:1158px;top:71px;width:1px;height:1px;background:#b8b4ae"></div>
<div style="left:1161px;top:71px;width:1px;height:1px;background:#b8b4ae"></div>
<div style="left:1158px;top:74px;width:1px;height:1px;background:#b8b4ae"></div>
<div style="left:1161px;top:74px;width:1px;height:1px;background:#b8b4ae"></div>
<div style="left:1158px;top:77px;width:1px;height:1px;background:#b8b4ae"></div>
<div style="left:1161px;top:77px;width:1px;height:1px;background:#b8b4ae"></div>
<div style="left:1158px;top:80px;width:1px;height:1px;background:#b8b4ae"></div>
<div style="left:1161px;top:80px;width:1px;height:1px;background:#b8b4ae"></div>
<div style="left:1158px;top:83px;width:1px;height:1px;background:#b8b4ae"></div>
<div style="left:1161px;top:83px;width:1px;height:1px;background:#b8b4ae"></div>
<div style="left:1175px;top:68px;width:1px;height:1px;background:#b8b4ae"></div>
<div style="left:1178px;top:68px;width:1px;height:1px;background:#b8b4ae"></div>
<div style="left:1175px;top:71px;width:1px;height:1px;background:#b8b4ae"></div>
<div style="left:1178px;top:71px;width:1px;height:1px;background:#b8b4ae"></div>
<div style="left:1175px;top:74px;width:1px;height:1px;background:#b8b4ae"></div>
<div style="left:1178px;top:74px;width:1px;height:1px;background:#b8b4ae"></div>
<div style="left:1175px;top:77px;width:1px;height:1px;background:#b8b4ae"></div>
<div style="left:1178px;top:77px;width:1px;height:1px;background:#b8b4ae"></div>
<div style="left:1175px;top:80px;width:1px;height:1px;background:#b8b4ae"></div>
<div style="left:1178px;top:80px;width:1px;height:1px;background:#b8b4ae"></div>
<div style="left:1175px;top:83px;width:1px;height:1px;background:#b8b4ae"></div>
<div style="left:1178px;top:83px;width:1px;height:1px;background:#b8b4ae"></div>
<svg style="left:1186px;top:64px;" width="24" height="24" viewBox="0 0 24 24"><path d="M4 4 L15 4 L18 7 L18 22 L4 22 Z" fill="#fff" stroke="#777" stroke-width="0.8"/><circle cx="11" cy="14" r="5" fill="none" stroke="#e8805a" stroke-width="1"/><circle cx="11" cy="14" r="3" fill="none" stroke="#5a9ae0" stroke-width="1"/><path d="M19 1 L19 9 M15 5 L23 5" stroke="#3aa030" stroke-width="2"/></svg>
<div style="left:1223px;top:68px;width:1px;height:1px;background:#b8b4ae"></div>
<div style="left:1226px;top:68px;width:1px;height:1px;background:#b8b4ae"></div>
<div style="left:1223px;top:71px;width:1px;height:1px;background:#b8b4ae"></div>
<div style="left:1226px;top:71px;width:1px;height:1px;background:#b8b4ae"></div>
<div style="left:1223px;top:74px;width:1px;height:1px;background:#b8b4ae"></div>
<div style="left:1226px;top:74px;width:1px;height:1px;background:#b8b4ae"></div>
<div style="left:1223px;top:77px;width:1px;height:1px;background:#b8b4ae"></div>
<div style="left:1226px;top:77px;width:1px;height:1px;background:#b8b4ae"></div>
<div style="left:1223px;top:80px;width:1px;height:1px;background:#b8b4ae"></div>
<div style="left:1226px;top:80px;width:1px;height:1px;background:#b8b4ae"></div>
<div style="left:1223px;top:83px;width:1px;height:1px;background:#b8b4ae"></div>
<div style="left:1226px;top:83px;width:1px;height:1px;background:#b8b4ae"></div>
<svg style="left:1235px;top:64px;" width="24" height="24" viewBox="0 0 24 24"><path d="M2 6 C2 2 22 2 22 6 L20 19 C18 23 6 23 4 19 Z" fill="#d8d7d3" stroke="#c6c5c0" stroke-width="0.6"/><path d="M12 10 L21 6 L20 17 Z" fill="#b6b5b0"/></svg>
<svg style="left:1268px;top:64px;" width="24" height="24" viewBox="0 0 24 24"><path d="M1 4 L23 1 L23 18 L1 23 Z" fill="#8d8c88"/><path d="M7 3 L6 22 M13 2 L12 21 M18 2 L18 19" stroke="#6f6e6a" stroke-width="1.5"/></svg>
<div style="left:1305px;top:68px;width:1px;height:1px;background:#b8b4ae"></div>
<div style="left:1308px;top:68px;width:1px;height:1px;background:#b8b4ae"></div>
<div style="left:1305px;top:71px;width:1px;height:1px;background:#b8b4ae"></div>
<div style="left:1308px;top:71px;width:1px;height:1px;background:#b8b4ae"></div>
<div style="left:1305px;top:74px;width:1px;height:1px;background:#b8b4ae"></div>
<div style="left:1308px;top:74px;width:1px;height:1px;background:#b8b4ae"></div>
<div style="left:1305px;top:77px;width:1px;height:1px;background:#b8b4ae"></div>
<div style="left:1308px;top:77px;width:1px;height:1px;background:#b8b4ae"></div>
<div style="left:1305px;top:80px;width:1px;height:1px;background:#b8b4ae"></div>
<div style="left:1308px;top:80px;width:1px;height:1px;background:#b8b4ae"></div>
<div style="left:1305px;top:83px;width:1px;height:1px;background:#b8b4ae"></div>
<div style="left:1308px;top:83px;width:1px;height:1px;background:#b8b4ae"></div>
<svg style="left:1317px;top:64px;" width="24" height="24" viewBox="0 0 24 24"><path d="M1 17 L17 2 L23 8 L7 23 Z" fill="#f0c419" stroke="#6e5a10" stroke-width="0.9"/><path d="M4.0 15.0 L6.0 17.0" stroke="#6e5a10" stroke-width="0.8"/><path d="M6.6 12.6 L8.6 14.6" stroke="#6e5a10" stroke-width="0.8"/><path d="M9.2 10.2 L11.2 12.2" stroke="#6e5a10" stroke-width="0.8"/><path d="M11.8 7.800000000000001 L13.8 9.8" stroke="#6e5a10" stroke-width="0.8"/><path d="M14.4 5.4 L16.4 7.4" stroke="#6e5a10" stroke-width="0.8"/><path d="M17.0 3.0 L19.0 5.0" stroke="#6e5a10" stroke-width="0.8"/></svg>
<div style="left:1355px;top:68px;width:1px;height:1px;background:#b8b4ae"></div>
<div style="left:1358px;top:68px;width:1px;height:1px;background:#b8b4ae"></div>
<div style="left:1355px;top:71px;width:1px;height:1px;background:#b8b4ae"></div>
<div style="left:1358px;top:71px;width:1px;height:1px;background:#b8b4ae"></div>
<div style="left:1355px;top:74px;width:1px;height:1px;background:#b8b4ae"></div>
<div style="left:1358px;top:74px;width:1px;height:1px;background:#b8b4ae"></div>
<div style="left:1355px;top:77px;width:1px;height:1px;background:#b8b4ae"></div>
<div style="left:1358px;top:77px;width:1px;height:1px;background:#b8b4ae"></div>
<div style="left:1355px;top:80px;width:1px;height:1px;background:#b8b4ae"></div>
<div style="left:1358px;top:80px;width:1px;height:1px;background:#b8b4ae"></div>
<div style="left:1355px;top:83px;width:1px;height:1px;background:#b8b4ae"></div>
<div style="left:1358px;top:83px;width:1px;height:1px;background:#b8b4ae"></div>
<svg style="left:1365px;top:64px;" width="24" height="24" viewBox="0 0 24 24"><path d="M6 2 L17 2 L20 5 L20 20 L6 20 Z" fill="#fff" stroke="#777" stroke-width="0.8"/><path d="M3 5 L14 5 L17 8 L17 23 L3 23 Z" fill="#fff" stroke="#777" stroke-width="0.8"/><circle cx="10" cy="15" r="5" fill="none" stroke="#e8805a" stroke-width="1"/><circle cx="10" cy="15" r="3" fill="none" stroke="#5a9ae0" stroke-width="1"/></svg>
<div class="t" style="left:1px;top:97px;height:17px;line-height:17px;font-size:13.4px">Pipeline Browser</div>
<svg style="left:585px;top:99px;" width="27" height="13" viewBox="0 0 27 13"><rect x="0.5" y="0.5" width="11" height="11" rx="2" fill="none" stroke="#888" stroke-width="1"/><rect x="2.5" y="5.5" width="4.5" height="4" fill="none" stroke="#666" stroke-width="0.9"/><path d="M4.5 5.5 L4.5 2.5 L9.5 2.5 L9.5 7 L7 7" fill="none" stroke="#666" stroke-width="0.9"/><rect x="14.5" y="0.5" width="11" height="11" rx="2" fill="none" stroke="#777" stroke-width="1"/><path d="M17 3 L23 9 M23 3 L17 9" stroke="#555" stroke-width="1.8"/></svg>
<div style="left:0px;top:115px;width:612px;height:140px;background:#fff;border-top:1px solid #c4c0bb;border-bottom:1px solid #c4c0bb;box-sizing:border-box"></div>
<div style="left:597px;top:116px;width:15px;height:139px;background:#dcd9d5;border:1px solid #c4c0bb;box-sizing:border-box"></div>
<div style="left:598px;top:117px;width:13px;height:12px;background:#f6f4f2"></div>
<svg style="left:599px;top:118px;" width="10" height="10" viewBox="0 0 10 10"><path d="M1 7 L5 3 L9 7 Z" fill="#444"/></svg>
<div style="left:598px;top:140px;width:13px;height:26px;background:linear-gradient(90deg,#fdfcfb,#f0edea);border-top:1px solid #c4c0bb;border-bottom:1px solid #c4c0bb;box-sizing:border-box"></div>
<div style="left:598px;top:241px;width:13px;height:13px;background:#f6f4f2"></div>
<svg style="left:599px;top:243px;" width="10" height="10" viewBox="0 0 10 10"><path d="M1 3 L5 7 L9 3 Z" fill="#444"/></svg>
<div style="left:27px;top:116px;width:1px;height:138px;background:#9a9a9a"></div>
<div style="left:45px;top:116px;width:1px;height:78px;background:#9a9a9a"></div>
<div style="left:63px;top:116px;width:1px;height:59px;background:#9a9a9a"></div>
<div style="left:63px;top:131px;width:10px;height:1px;background:#9a9a9a"></div>
<div style="left:63px;top:153px;width:10px;height:1px;background:#9a9a9a"></div>
<div style="left:63px;top:175px;width:10px;height:1px;background:#9a9a9a"></div>
<div style="left:41px;top:193px;width:9px;height:9px;border:1px solid #777;background:#fff;box-sizing:border-box"></div>
<div style="left:43px;top:197px;width:5px;height:1px;background:#000"></div>
<div style="left:50px;top:197px;width:5px;height:1px;background:#9a9a9a"></div>
<div style="left:18px;top:210px;width:127px;height:18px;background:#308cc6"></div>
<div style="left:63px;top:207px;width:1px;height:35px;background:#9a9a9a"></div>
<div style="left:63px;top:241px;width:10px;height:1px;background:#9a9a9a"></div>
<div style="left:64px;top:219px;width:9px;height:1px;background:#7aa8d0"></div>
<svg style="left:73px;top:123px;" width="17" height="16" viewBox="0 0 17 16"><path d="M0.5 1 L0.5 15.5 L16 15.5" fill="none" stroke="#6a6a50" stroke-width="1"/><rect x="1" y="9" width="3" height="6" fill="#1e90f0"/><rect x="4" y="5" width="3" height="10" fill="#7cc0a0"/><rect x="7" y="1" width="3" height="14" fill="#5cb040"/><rect x="10" y="6" width="3" height="9" fill="#f0d000"/><rect x="13" y="10" width="3" height="5" fill="#f03010"/></svg>
<div class="t" style="left:92px;top:122px;height:17px;line-height:17px;font-size:13.4px">Report</div>
<svg style="left:73px;top:145px;" width="17" height="16" viewBox="0 0 17 16"><path d="M0.5 0 L0.5 15.5 L16 15.5" fill="none" stroke="#6a6a50" stroke-width="1"/><path d="M1 10 L3 6 L5 11 L7 5 L9 10 L11 4 L13 8 L15 3" fill="none" stroke="#3a8ad8" stroke-width="1"/></svg>
<div class="t" style="left:92px;top:144px;height:17px;line-height:17px;font-size:13.4px">Quantities</div>
<svg style="left:73px;top:167px;" width="17" height="16" viewBox="0 0 17 16"><path d="M0.5 0 L0.5 15.5 L16 15.5" fill="none" stroke="#6a6a50" stroke-width="1"/><path d="M1 10 L3 6 L5 11 L7 5 L9 10 L11 4 L13 8 L15 3" fill="none" stroke="#3a8ad8" stroke-width="1"/></svg>
<div class="t" style="left:92px;top:166px;height:17px;line-height:17px;font-size:13.4px">Residuals</div>
<svg style="left:55px;top:189px;" width="15" height="16" viewBox="0 0 15 16"><circle cx="7" cy="8" r="5.5" fill="none" stroke="#cfd8e0" stroke-width="0.5" stroke-dasharray="1 1"/><circle cx="7" cy="8" r="1.8" fill="#d0d0d0"/><circle cx="7" cy="1.5" r="1.3" fill="#d02020"/><circle cx="1.5" cy="5" r="1.3" fill="#f0903a"/><circle cx="1.5" cy="11" r="1.3" fill="#f0903a"/><circle cx="12.5" cy="5" r="1.3" fill="#40b040"/><circle cx="12.5" cy="11" r="1.3" fill="#40b040"/><circle cx="7" cy="14.5" r="1.3" fill="#3070e0"/></svg>
<div class="t" style="left:74px;top:188px;height:17px;line-height:17px;font-size:13.4px">TFEA1</div>
<svg style="left:73px;top:211px;" width="15" height="16" viewBox="0 0 15 16"><circle cx="7" cy="8" r="5.5" fill="none" stroke="#8fb8d8" stroke-width="0.5" stroke-dasharray="1 1"/><circle cx="7" cy="8" r="1.8" fill="#e8e8e8"/><circle cx="7" cy="1.5" r="1.3" fill="#d02020"/><circle cx="1.5" cy="5" r="1.3" fill="#f0903a"/><circle cx="1.5" cy="11" r="1.3" fill="#f0903a"/><circle cx="12.5" cy="5" r="1.3" fill="#40b040"/><circle cx="12.5" cy="11" r="1.3" fill="#40b040"/><circle cx="7" cy="14.5" r="1.3" fill="#3070e0"/></svg>
<div class="t" style="left:92px;top:210px;height:17px;line-height:17px;font-size:13.4px;color:#fff">Settings</div>
<svg style="left:73px;top:233px;" width="17" height="16" viewBox="0 0 17 16"><path d="M0.5 1 L0.5 15.5 L16 15.5" fill="none" stroke="#6a6a50" stroke-width="1"/><rect x="1" y="9" width="3" height="6" fill="#1e90f0"/><rect x="4" y="5" width="3" height="10" fill="#7cc0a0"/><rect x="7" y="1" width="3" height="14" fill="#5cb040"/><rect x="10" y="6" width="3" height="9" fill="#f0d000"/><rect x="13" y="10" width="3" height="5" fill="#f03010"/></svg>
<div class="t" style="left:92px;top:232px;height:17px;line-height:17px;font-size:13.4px">Report</div>
<svg style="left:2px;top:124px;" width="14" height="12" viewBox="0 0 14 12"><path d="M1 6 C4 2 10 2 13 6" fill="none" stroke="#bbb" stroke-width="0.8"/><path d="M1 6 C4 9 10 9 13 6 M4 8 L3 10 M7 9 L7 11 M10 8 L11 10" fill="none" stroke="#bbb" stroke-width="0.7"/></svg>
<svg style="left:1px;top:234px;" width="16" height="12" viewBox="0 0 16 12"><path d="M1 6 C4 1 12 1 15 6 C12 11 4 11 1 6 Z" fill="#fff" stroke="#2a6ab0" stroke-width="1"/><circle cx="8" cy="6" r="3.6" fill="#2a7ad0"/><circle cx="8" cy="6" r="1.8" fill="#000"/></svg>
<div style="left:294px;top:257px;width:18px;height:1px;background:repeating-linear-gradient(90deg,#b8b4ae 0 1px,transparent 1px 3px)"></div>
<div style="left:0px;top:286px;width:612px;height:1px;background:#c4c0bb"></div>
<div style="left:0px;top:262px;width:81px;height:25px;background:#efebe7;border:1px solid #c4c0bb;border-bottom:none;border-radius:3px 3px 0 0"></div>
<div class="t" style="left:0px;top:264px;width:82px;text-align:center;height:20px;line-height:20px;font-size:13.4px">Properties</div>
<div style="left:83px;top:264px;width:51px;height:21px;background:linear-gradient(#e3dfdb,#d9d5d1);border:1px solid #c4c0bb;border-bottom:none;border-radius:3px 3px 0 0"></div>
<div class="t" style="left:83px;top:266px;width:52px;text-align:center;height:20px;line-height:20px;font-size:13.4px">View</div>
<div style="left:135px;top:264px;width:67px;height:21px;background:linear-gradient(#e3dfdb,#d9d5d1);border:1px solid #c4c0bb;border-bottom:none;border-radius:3px 3px 0 0"></div>
<div class="t" style="left:135px;top:266px;width:68px;text-align:center;height:20px;line-height:20px;font-size:13.4px">Display</div>
<div style="left:204px;top:264px;width:94px;height:21px;background:linear-gradient(#e3dfdb,#d9d5d1);border:1px solid #c4c0bb;border-bottom:none;border-radius:3px 3px 0 0"></div>
<div class="t" style="left:204px;top:266px;width:95px;text-align:center;height:20px;line-height:20px;font-size:13.4px">Information</div>
<div style="left:299px;top:264px;width:147px;height:21px;background:linear-gradient(#e3dfdb,#d9d5d1);border:1px solid #c4c0bb;border-bottom:none;border-radius:3px 3px 0 0"></div>
<div class="t" style="left:299px;top:266px;width:148px;text-align:center;height:20px;line-height:20px;font-size:13.4px">Multi-block Inspector</div>
<div class="t" style="left:1px;top:289px;height:17px;line-height:17px;font-size:13.4px">Properties</div>
<svg style="left:585px;top:291px;" width="27" height="13" viewBox="0 0 27 13"><rect x="0.5" y="0.5" width="11" height="11" rx="2" fill="none" stroke="#888" stroke-width="1"/><rect x="2.5" y="5.5" width="4.5" height="4" fill="none" stroke="#666" stroke-width="0.9"/><path d="M4.5 5.5 L4.5 2.5 L9.5 2.5 L9.5 7 L7 7" fill="none" stroke="#666" stroke-width="0.9"/><rect x="14.5" y="0.5" width="11" height="11" rx="2" fill="none" stroke="#777" stroke-width="1"/><path d="M17 3 L23 9 M23 3 L17 9" stroke="#555" stroke-width="1.8"/></svg>
<div style="left:6px;top:316px;width:145px;height:22px;border:1px solid #2b6ea8;border-radius:3px;background:linear-gradient(#c5efc5,#a5d8a5)"></div>
<svg style="left:52px;top:319px;" width="16" height="17" viewBox="0 0 16 17"><path d="M1 6 L4 4 L8 4 L8 14 L5 16 L1 16 Z" fill="#b4b5aa" stroke="#888" stroke-width="0.5"/><rect x="4" y="6" width="4" height="10" fill="#eee" stroke="#888" stroke-width="0.4"/><path d="M6 8 L12 3 L10 2 L15 0.5 L14 5 L13 4 L7 9 Z" fill="#8fcf78" stroke="#5e9e4a" stroke-width="0.4"/></svg>
<div class="t" style="left:70px;top:318px;height:20px;line-height:20px;font-size:13.4px">Apply</div>
<div class="btn" style="left:156px;top:316px;width:145px;height:22px;"></div>
<svg style="left:205px;top:319px;" width="17" height="18" viewBox="0 0 17 18"><circle cx="8.5" cy="9" r="6.5" fill="none" stroke="#d42020" stroke-width="2.2"/><path d="M4 13.5 L13 4.5" stroke="#d42020" stroke-width="2.2"/></svg>
<div class="t" style="left:221px;top:318px;height:20px;line-height:20px;font-size:13.4px">Reset</div>
<div class="btn" style="left:306px;top:316px;width:145px;height:22px;"></div>
<svg style="left:351px;top:320px;" width="13" height="15" viewBox="0 0 13 15"><path d="M2 3 L11 12 M11 3 L2 12" stroke="#e02020" stroke-width="3.2" stroke-linecap="round"/></svg>
<div class="t" style="left:366px;top:318px;height:20px;line-height:20px;font-size:13.4px">Delete</div>
<div class="btn" style="left:455px;top:316px;width:145px;height:22px;"></div>
<svg style="left:521px;top:318px;" width="14" height="19" viewBox="0 0 14 19"><path d="M3 6 C3 1 12 1 12 6 C12 9 8 9 8 13" fill="none" stroke="#6aaa4a" stroke-width="2"/><circle cx="8" cy="16.5" r="1.3" fill="#6aaa4a"/></svg>
<div class="inp" style="left:6px;top:346px;width:569px;height:20px;"></div>
<div class="t" style="left:12px;top:346px;height:22px;line-height:22px;font-size:13.4px;color:#9a9894;left:8px">Search ... (use Esc to clear text)</div>
<div style="left:580px;top:346px;width:20px;height:20px;border:1px solid #c4c0bb;border-radius:3px;background:#dedad6"></div>
<svg style="left:583px;top:349px;" width="16" height="16" viewBox="0 0 16 16"><circle cx="8" cy="8" r="5" fill="none" stroke="#aaa" stroke-width="2.5" stroke-dasharray="2.2 1.6"/><circle cx="8" cy="8" r="3" fill="#dedad6" stroke="#aaa" stroke-width="1"/></svg>
<div style="left:80px;top:375px;width:47px;height:21px;border:1px solid #cbc7c2;border-radius:3px;background:linear-gradient(#f6f4f2,#ebe7e3)"></div>
<svg style="left:96px;top:378px;" width="18" height="17" viewBox="0 0 18 17"><rect x="6" y="1" width="9" height="11" fill="#d2d2d0" stroke="#aaa" stroke-width="0.7"/><rect x="2" y="4" width="9" height="11" fill="#d8d8d6" stroke="#aaa" stroke-width="0.7"/><path d="M4 8 L9 8 M4 10 L9 10 M4 12 L9 12" stroke="#aaa" stroke-width="0.6"/></svg>
<div style="left:208px;top:375px;width:47px;height:21px;border:1px solid #cbc7c2;border-radius:3px;background:#ebe7e3"></div>
<svg style="left:224px;top:378px;" width="18" height="17" viewBox="0 0 18 17"><rect x="6" y="1" width="9" height="12" fill="#d2d2d0" stroke="#bbb" stroke-width="0.6"/><rect x="2" y="4" width="9" height="11" fill="#d8d8d6" stroke="#bbb" stroke-width="0.6"/></svg>
<div class="btn" style="left:336px;top:375px;width:48px;height:21px;"></div>
<svg style="left:352px;top:378px;" width="18" height="18" viewBox="0 0 18 18"><path d="M3 8 A6 6 0 0 1 14 6" fill="none" stroke="#2a7ab0" stroke-width="2.2"/><path d="M12 2 L16 7 L10 8 Z" fill="#2a7ab0"/><path d="M15 10 A6 6 0 0 1 4 12" fill="none" stroke="#2a7ab0" stroke-width="2.2"/><path d="M6 16 L2 11 L8 10 Z" fill="#2a7ab0"/></svg>
<div class="btn" style="left:464px;top:375px;width:48px;height:21px;"></div>
<svg style="left:480px;top:378px;" width="18" height="18" viewBox="0 0 18 18"><path d="M2 2 L14 2 L16 4 L16 16 L2 16 Z" fill="#3a6fc0" stroke="#234a88" stroke-width="0.8"/><rect x="4.5" y="2.5" width="9" height="6" fill="#fff"/><rect x="5" y="11" width="8" height="5" fill="#ddd"/><rect x="6.5" y="12" width="2.5" height="3" fill="#222"/></svg>
<div style="left:589px;top:375px;width:14px;height:684px;background:linear-gradient(90deg,#fbfaf9,#ece8e4);border-left:1px solid #cfcbc6;box-sizing:border-box"></div>
<svg style="left:591px;top:377px;" width="10" height="10" viewBox="0 0 10 10"><path d="M1 7 L5 3 L9 7 Z" fill="#444"/></svg>
<div style="left:590px;top:388px;width:13px;height:1px;background:#d6d2cd"></div>
<div style="left:590px;top:1021px;width:13px;height:28px;background:#dcd8d4;border:1px solid #c4c0bb;box-sizing:border-box"></div>
<svg style="left:591px;top:1050px;" width="10" height="10" viewBox="0 0 10 10"><path d="M1 3 L5 7 L9 3 Z" fill="#444"/></svg>
<div style="left:6px;top:405px;width:583px;height:22px;background:#ffd600"></div>
<div style="left:11px;top:414px;width:13px;height:4px;background:#2a8ed0"></div>
<div class="t" style="left:30px;top:405px;height:22px;line-height:22px;font-size:13.4px;font-weight:bold">SIMULATION</div>
<div style="left:16px;top:437px;width:571px;height:22px;border:1px solid #b9b5b0;background:#efebe7"></div>
<div style="left:22px;top:443px;width:13px;height:13px;background:linear-gradient(90deg,transparent 5px,#2a8ed0 5px,#2a8ed0 9px,transparent 9px),linear-gradient(transparent 5px,#2a8ed0 5px,#2a8ed0 9px,transparent 9px)"></div>
<div class="t" style="left:41px;top:437px;height:24px;line-height:24px;font-size:13.4px;font-weight:bold">FEA Analysis</div>
<div style="left:16px;top:465px;width:571px;height:22px;border:1px solid #b9b5b0;background:#efebe7"></div>
<div style="left:22px;top:476px;width:13px;height:4px;background:#2a8ed0"></div>
<div class="t" style="left:41px;top:465px;height:24px;line-height:24px;font-size:13.4px;font-weight:bold">Solver</div>
<div class="t" style="left:16px;top:493px;height:20px;line-height:20px;font-size:13.4px">Linear algebra solver</div>
<div class="btn" style="left:147px;top:495px;width:440px;height:20px;"></div>
<div class="t" style="left:153px;top:495px;height:22px;line-height:22px;font-size:13.4px">iterative</div>
<svg style="left:573px;top:503px;" width="10" height="6" viewBox="0 0 10 6"><path d="M1 1 L9 1 L5 5 Z" fill="#555"/></svg>
<div class="t" style="left:16px;top:518px;height:20px;line-height:20px;font-size:13.4px">Preconditioner</div>
<div class="btn" style="left:147px;top:521px;width:440px;height:20px;"></div>
<div class="t" style="left:153px;top:521px;height:22px;line-height:22px;font-size:13.4px">cholesky</div>
<svg style="left:573px;top:529px;" width="10" height="6" viewBox="0 0 10 6"><path d="M1 1 L9 1 L5 5 Z" fill="#555"/></svg>
<div class="t" style="left:16px;top:544px;height:20px;line-height:20px;font-size:13.4px">Finite element order</div>
<div class="btn" style="left:147px;top:547px;width:440px;height:20px;"></div>
<div class="t" style="left:153px;top:547px;height:22px;line-height:22px;font-size:13.4px">second</div>
<svg style="left:573px;top:555px;" width="10" height="6" viewBox="0 0 10 6"><path d="M1 1 L9 1 L5 5 Z" fill="#555"/></svg>
<div class="inp" style="left:16px;top:576px;width:12px;height:12px;border-radius:1px"></div>
<div class="t" style="left:35px;top:573px;height:20px;line-height:20px;font-size:13.4px">Use non-linear equations</div>
<div style="left:16px;top:597px;width:571px;height:22px;border:1px solid #b9b5b0;background:#efebe7"></div>
<div style="left:22px;top:603px;width:13px;height:13px;background:linear-gradient(90deg,transparent 5px,#2a8ed0 5px,#2a8ed0 9px,transparent 9px),linear-gradient(transparent 5px,#2a8ed0 5px,#2a8ed0 9px,transparent 9px)"></div>
<div class="t" style="left:41px;top:597px;height:24px;line-height:24px;font-size:13.4px;font-weight:bold">Scripting</div>
<div style="left:6px;top:625px;width:583px;height:22px;background:#ffd600"></div>
<div style="left:11px;top:634px;width:13px;height:4px;background:#2a8ed0"></div>
<div class="t" style="left:30px;top:625px;height:22px;line-height:22px;font-size:13.4px;font-weight:bold">MATERIAL PROPERTIES</div>
<div class="t" style="left:6px;top:650px;height:20px;line-height:20px;font-size:13.4px">Material name</div>
<div class="inp" style="left:109px;top:653px;width:478px;height:20px;"></div>
<div class="t" style="left:115px;top:653px;height:22px;line-height:22px;font-size:13.4px;left:112px">steel</div>
<div class="t" style="left:6px;top:676px;height:20px;line-height:20px;font-size:13.4px">Material type</div>
<div class="btn" style="left:109px;top:679px;width:478px;height:20px;"></div>
<div class="t" style="left:115px;top:679px;height:22px;line-height:22px;font-size:13.4px;left:113px">isotropic</div>
<svg style="left:573px;top:687px;" width="10" height="6" viewBox="0 0 10 6"><path d="M1 1 L9 1 L5 5 Z" fill="#555"/></svg>
<div class="t" style="left:6px;top:702px;height:20px;line-height:20px;font-size:13.4px">Young modulus</div>
<div class="inp" style="left:109px;top:705px;width:413px;height:20px;"></div>
<div class="t" style="left:115px;top:705px;height:22px;line-height:22px;font-size:13.4px;left:112px">2.1e+11</div>
<div class="btn" style="left:528px;top:705px;width:59px;height:20px;"></div>
<div class="t" style="left:534px;top:705px;height:22px;line-height:22px;font-size:13.4px;left:532px">Pa</div>
<svg style="left:573px;top:713px;" width="10" height="6" viewBox="0 0 10 6"><path d="M1 1 L9 1 L5 5 Z" fill="#555"/></svg>
<div class="t" style="left:6px;top:728px;height:20px;line-height:20px;font-size:13.4px">Poisson ratio</div>
<div class="inp" style="left:109px;top:731px;width:478px;height:20px;"></div>
<div class="t" style="left:115px;top:731px;height:22px;line-height:22px;font-size:13.4px;left:112px">0.3</div>
<div class="t" style="left:6px;top:754px;height:20px;line-height:20px;font-size:13.4px">Material Density</div>
<div class="inp" style="left:109px;top:757px;width:396px;height:20px;"></div>
<div class="t" style="left:115px;top:757px;height:22px;line-height:22px;font-size:13.4px;left:112px">7800</div>
<div class="btn" style="left:511px;top:757px;width:76px;height:20px;"></div>
<div class="t" style="left:517px;top:757px;height:22px;line-height:22px;font-size:13.4px;left:515px">kg/m^3</div>
<svg style="left:573px;top:765px;" width="10" height="6" viewBox="0 0 10 6"><path d="M1 1 L9 1 L5 5 Z" fill="#555"/></svg>
<div style="left:6px;top:783px;width:583px;height:22px;background:#ffd600"></div>
<div style="left:11px;top:792px;width:13px;height:4px;background:#2a8ed0"></div>
<div class="t" style="left:30px;top:783px;height:22px;line-height:22px;font-size:13.4px;font-weight:bold">BOUNDARY CONDITIONS</div>
<div style="left:16px;top:815px;width:571px;height:22px;border:1px solid #b9b5b0;background:#efebe7"></div>
<div style="left:22px;top:826px;width:13px;height:4px;background:#2a8ed0"></div>
<div class="t" style="left:41px;top:815px;height:24px;line-height:24px;font-size:13.4px;font-weight:bold">Fixed regions</div>
<div class="t" style="left:16px;top:842px;height:20px;line-height:20px;font-size:13.4px">Number of zero displacement regions</div>
<div class="inp" style="left:246px;top:847px;width:277px;height:19px;"></div>
<div class="t" style="left:252px;top:847px;height:21px;line-height:21px;font-size:13.4px;left:249px">1</div>
<div class="btn" style="left:529px;top:846px;width:26px;height:20px;"></div>
<div style="left:536px;top:855px;width:14px;height:4px;background:#2a8ed0"></div>
<div style="left:541px;top:850px;width:4px;height:14px;background:#2a8ed0"></div>
<div class="btn" style="left:561px;top:846px;width:26px;height:20px;"></div>
<div style="left:568px;top:855px;width:14px;height:4px;background:#2a8ed0"></div>
<div style="left:16px;top:873px;width:571px;height:177px;border:1px solid #b9b5b0;background:#faf7f4"></div>
<div class="t" style="left:18px;top:872px;height:20px;line-height:20px;font-size:13.4px">Fixed shape</div>
<div class="btn" style="left:94px;top:876px;width:491px;height:19px;"></div>
<div class="t" style="left:100px;top:876px;height:21px;line-height:21px;font-size:13.4px;left:99px">cylinder</div>
<svg style="left:571px;top:883px;" width="10" height="6" viewBox="0 0 10 6"><path d="M1 1 L9 1 L5 5 Z" fill="#555"/></svg>
<div class="t" style="left:18px;top:898px;height:20px;line-height:20px;font-size:13.4px">Radius</div>
<div class="inp" style="left:94px;top:902px;width:491px;height:19px;"></div>
<div class="t" style="left:100px;top:902px;height:21px;line-height:21px;font-size:13.4px;left:97px">1</div>
<div class="t" style="left:18px;top:924px;height:20px;line-height:20px;font-size:13.4px">Height</div>
<div class="inp" style="left:94px;top:928px;width:491px;height:19px;"></div>
<div class="t" style="left:100px;top:928px;height:21px;line-height:21px;font-size:13.4px;left:97px">0.147</div>
<div class="t" style="left:18px;top:950px;height:20px;line-height:20px;font-size:13.4px">Axis</div>
<div class="inp" style="left:94px;top:954px;width:160px;height:19px;"></div>
<div class="t" style="left:100px;top:954px;height:21px;line-height:21px;font-size:13.4px;left:97px">0</div>
<div class="inp" style="left:260px;top:954px;width:159px;height:19px;"></div>
<div class="t" style="left:266px;top:954px;height:21px;line-height:21px;font-size:13.4px;left:263px">0</div>
<div class="inp" style="left:425px;top:954px;width:160px;height:19px;"></div>
<div class="t" style="left:431px;top:954px;height:21px;line-height:21px;font-size:13.4px;left:428px">1</div>
<div class="t" style="left:18px;top:976px;height:20px;line-height:20px;font-size:13.4px">Origin</div>
<div class="inp" style="left:94px;top:980px;width:160px;height:19px;"></div>
<div class="t" style="left:100px;top:980px;height:21px;line-height:21px;font-size:13.4px;left:97px">0</div>
<div class="inp" style="left:260px;top:980px;width:159px;height:19px;"></div>
<div class="t" style="left:266px;top:980px;height:21px;line-height:21px;font-size:13.4px;left:263px">0</div>
<div class="inp" style="left:425px;top:980px;width:160px;height:19px;"></div>
<div class="t" style="left:431px;top:980px;height:21px;line-height:21px;font-size:13.4px;left:428px">0</div>
<div class="inp" style="left:18px;top:1021px;width:12px;height:12px;border-radius:1px"></div>
<div class="t" style="left:36px;top:1018px;height:20px;line-height:20px;font-size:13.4px">Surface only</div>
<div class="t" style="left:16px;top:1052px;height:20px;line-height:20px;font-size:13.4px">Number of fixed rotation regions</div>
<div class="inp" style="left:246px;top:1057px;width:277px;height:17px;"></div>
<div class="btn" style="left:529px;top:1057px;width:26px;height:19px;"></div>
<div class="btn" style="left:561px;top:1057px;width:26px;height:19px;"></div>
<div style="left:612px;top:96px;width:7px;height:963px;background:#efebe7"></div>
<div style="left:619px;top:120px;width:1383px;height:1px;background:#bdb9b4"></div>
<div style="left:619px;top:97px;width:113px;height:24px;background:linear-gradient(#fbfaf8,#f3f1ee);border:1px solid #c4c0bb;border-bottom:none;border-radius:3px 3px 0 0"></div>
<div style="left:631px;top:104px;width:10px;height:10px;border:1.5px solid #111;border-top-width:3px;box-sizing:border-box"></div>
<div class="t" style="left:644px;top:100px;height:18px;line-height:18px;font-size:13.4px">Layout #1</div>
<svg style="left:710px;top:104px;" width="11" height="11" viewBox="0 0 11 11"><rect x="0.5" y="0.5" width="10" height="10" rx="2" fill="none" stroke="#777" stroke-width="0.9"/><path d="M3 3 L8 8 M8 3 L3 8" stroke="#444" stroke-width="1.6"/></svg>
<div style="left:735px;top:99px;width:113px;height:21px;background:linear-gradient(#e6e2de,#dedad6);border:1px solid #c4c0bb;border-bottom:none;border-radius:3px 3px 0 0"></div>
<div style="left:747px;top:105px;width:10px;height:10px;border:1.5px solid #111;border-top-width:3px;box-sizing:border-box"></div>
<div class="t" style="left:760px;top:101px;height:18px;line-height:18px;font-size:13.4px">Layout #2</div>
<svg style="left:826px;top:105px;" width="11" height="11" viewBox="0 0 11 11"><rect x="0.5" y="0.5" width="10" height="10" rx="2" fill="none" stroke="#777" stroke-width="0.9"/><path d="M3 3 L8 8 M8 3 L3 8" stroke="#444" stroke-width="1.6"/></svg>
<div style="left:851px;top:99px;width:113px;height:21px;background:linear-gradient(#e6e2de,#dedad6);border:1px solid #c4c0bb;border-bottom:none;border-radius:3px 3px 0 0"></div>
<div style="left:863px;top:105px;width:10px;height:10px;border:1.5px solid #111;border-top-width:3px;box-sizing:border-box"></div>
<div class="t" style="left:876px;top:101px;height:18px;line-height:18px;font-size:13.4px">Layout #3</div>
<svg style="left:942px;top:105px;" width="11" height="11" viewBox="0 0 11 11"><rect x="0.5" y="0.5" width="10" height="10" rx="2" fill="none" stroke="#777" stroke-width="0.9"/><path d="M3 3 L8 8 M8 3 L3 8" stroke="#444" stroke-width="1.6"/></svg>
<div style="left:967px;top:99px;width:113px;height:21px;background:linear-gradient(#e6e2de,#dedad6);border:1px solid #c4c0bb;border-bottom:none;border-radius:3px 3px 0 0"></div>
<div style="left:979px;top:105px;width:10px;height:10px;border:1.5px solid #111;border-top-width:3px;box-sizing:border-box"></div>
<div class="t" style="left:992px;top:101px;height:18px;line-height:18px;font-size:13.4px">Layout #4</div>
<svg style="left:1058px;top:105px;" width="11" height="11" viewBox="0 0 11 11"><rect x="0.5" y="0.5" width="10" height="10" rx="2" fill="none" stroke="#777" stroke-width="0.9"/><path d="M3 3 L8 8 M8 3 L3 8" stroke="#444" stroke-width="1.6"/></svg>
<div style="left:1083px;top:99px;width:32px;height:21px;background:linear-gradient(#e6e2de,#dedad6);border:1px solid #c4c0bb;border-bottom:none;border-radius:3px 3px 0 0"></div>
<div class="t" style="left:1083px;top:100px;width:34px;text-align:center;height:18px;line-height:18px;font-size:15px">+</div>
<svg style="left:624px;top:125px;" width="18" height="18" viewBox="0 0 18 18"><g opacity="1"><rect x="2" y="4" width="14" height="10" rx="2" fill="#c8c8c6" stroke="#8f8f8c" stroke-width="0.8"/><rect x="6" y="2.5" width="6" height="2" fill="#aaa"/><circle cx="9" cy="9" r="3" fill="#a8d4f4" stroke="#8f8f8c" stroke-width="1"/></g><path d="M2 15 C2 11 9 11 8 16" fill="none" stroke="#e02020" stroke-width="1.8"/><path d="M0 13 L4 17 L1 17 Z" fill="#e02020"/></svg>
<svg style="left:650px;top:125px;" width="18" height="18" viewBox="0 0 18 18"><g opacity="0.55"><rect x="2" y="4" width="14" height="10" rx="2" fill="#c8c8c6" stroke="#8f8f8c" stroke-width="0.8"/><rect x="6" y="2.5" width="6" height="2" fill="#aaa"/><circle cx="9" cy="9" r="3" fill="#a8d4f4" stroke="#8f8f8c" stroke-width="1"/></g></svg>
<svg style="left:681px;top:125px;" width="18" height="18" viewBox="0 0 18 18"><path d="M1 4 L1 1 L4 1 M14 1 L17 1 L17 4 M1 14 L1 17 L4 17 M17 14 L17 17 L14 17" fill="none" stroke="#999" stroke-width="0.8"/><g opacity="1"><rect x="2" y="4" width="14" height="10" rx="2" fill="#c8c8c6" stroke="#8f8f8c" stroke-width="0.8"/><rect x="6" y="2.5" width="6" height="2" fill="#aaa"/><circle cx="9" cy="9" r="3" fill="#a8d4f4" stroke="#8f8f8c" stroke-width="1"/></g></svg>
<svg style="left:772px;top:125px;" width="18" height="18" viewBox="0 0 18 18"><rect x="1.5" y="1.5" width="15" height="15" fill="none" stroke="#888" stroke-width="0.8" stroke-dasharray="2 1.5"/><path d="M9 4 L9 14 M4 9 L14 9" stroke="#7cc060" stroke-width="3.2"/></svg>
<svg style="left:798px;top:125px;" width="18" height="18" viewBox="0 0 18 18"><rect x="1.5" y="1.5" width="15" height="15" fill="none" stroke="#888" stroke-width="0.8" stroke-dasharray="2 1.5"/><path d="M4 9 L14 9" stroke="#d02020" stroke-width="3"/></svg>
<svg style="left:823px;top:125px;" width="18" height="18" viewBox="0 0 18 18"><rect x="1.5" y="1.5" width="15" height="15" fill="none" stroke="#888" stroke-width="0.8" stroke-dasharray="2 1.5"/><path d="M7 3 L7 9 M4 6 L10 6" stroke="#7cc060" stroke-width="2.4"/><path d="M3 13 L10 13" stroke="#d02020" stroke-width="2.2"/><path d="M12 12 L16 16" stroke="#555" stroke-width="1.6"/></svg>
<svg style="left:856px;top:125px;" width="18" height="18" viewBox="0 0 18 18"><rect x="1.5" y="1.5" width="15" height="15" fill="none" stroke="#888" stroke-width="0.8" stroke-dasharray="2 1.5"/><path d="M3 14 L9 4 L15 14 Z" fill="#8fcf78" stroke="#5e9e4a" stroke-width="0.6"/><path d="M12 12 L16 16" stroke="#555" stroke-width="1.6"/></svg>
<svg style="left:882px;top:125px;" width="18" height="18" viewBox="0 0 18 18"><rect x="1.5" y="1.5" width="15" height="15" fill="none" stroke="#888" stroke-width="0.8" stroke-dasharray="2 1.5"/><path d="M3 14 L9 4 L15 14 Z" fill="none" stroke="#aaa" stroke-width="0.6"/><circle cx="9" cy="4" r="1.3" fill="#c03020"/><circle cx="3" cy="14" r="1.3" fill="#c03020"/><path d="M12 12 L16 16" stroke="#555" stroke-width="1.6"/></svg>
<svg style="left:909px;top:125px;" width="18" height="18" viewBox="0 0 18 18"><path d="M2 6 L8 3 L16 3 L16 11 L10 15 L2 15 Z" fill="#8fcf78" stroke="#5e9e4a" stroke-width="0.7"/><path d="M12 14 L15 17" stroke="#555" stroke-width="1.4"/></svg>
<svg style="left:934px;top:125px;" width="18" height="18" viewBox="0 0 18 18"><rect x="1.5" y="1.5" width="15" height="15" fill="none" stroke="#888" stroke-width="0.8" stroke-dasharray="2 1.5"/><circle cx="5" cy="5" r="1" fill="#d04030"/><circle cx="12" cy="4" r="1" fill="#d04030"/><circle cx="5" cy="12" r="1" fill="#d04030"/><circle cx="13" cy="11" r="1" fill="#d04030"/><path d="M12 12 L16 16" stroke="#555" stroke-width="1.6"/></svg>
<svg style="left:959px;top:125px;" width="18" height="18" viewBox="0 0 18 18"><rect x="1.5" y="1.5" width="15" height="15" fill="none" stroke="#888" stroke-width="0.8" stroke-dasharray="2 1.5"/><path d="M3 10 L12 4 L12 15 Z" fill="#8fcf78" stroke="#5e9e4a" stroke-width="0.6"/></svg>
<svg style="left:985px;top:125px;" width="18" height="18" viewBox="0 0 18 18"><circle cx="5" cy="5" r="1.6" fill="#b04030"/><circle cx="11" cy="4" r="1.6" fill="#b04030"/><circle cx="8" cy="9" r="1.6" fill="#b04030"/><circle cx="4" cy="12" r="1.6" fill="#b04030"/><circle cx="12" cy="13" r="1.6" fill="#b04030"/></svg>
<svg style="left:1012px;top:125px;" width="18" height="18" viewBox="0 0 18 18"><rect x="1.5" y="1.5" width="15" height="15" fill="none" stroke="#888" stroke-width="0.8" stroke-dasharray="2 1.5"/><circle cx="5" cy="5" r="2.2" fill="#2a8ed0"/><circle cx="5" cy="13" r="2.2" fill="#2a8ed0"/><circle cx="11" cy="10" r="3" fill="#8fcf78" stroke="#5e9e4a" stroke-width="0.6"/><path d="M13 13 L16 16" stroke="#555" stroke-width="1.6"/></svg>
<svg style="left:1039px;top:125px;" width="18" height="18" viewBox="0 0 18 18"><circle cx="7" cy="7" r="2.5" fill="#ddd" stroke="#bbb" stroke-width="0.6"/><path d="M9 9 L13 13" stroke="#bbb" stroke-width="1.4"/></svg>
<svg style="left:1064px;top:125px;" width="18" height="18" viewBox="0 0 18 18"><path d="M3 6 L7 2 L15 2 L15 12 L11 16 L3 16 Z" fill="#d8d7d3" stroke="#999" stroke-width="0.7"/><path d="M3 6 L11 6 L11 16 M11 6 L15 2" fill="none" stroke="#999" stroke-width="0.7"/><path d="M12 12 L16 16" stroke="#777" stroke-width="1.4"/></svg>
<svg style="left:1091px;top:125px;" width="18" height="18" viewBox="0 0 18 18"><path d="M2 14 L8 4 L14 14 Z" fill="#8fcf78" stroke="#5e9e4a" stroke-width="0.7"/><path d="M12 12 L16 16" stroke="#555" stroke-width="1.6"/></svg>
<div class="t" style="left:716px;top:126px;height:16px;line-height:16px;font-size:12px;font-weight:bold;color:#6f705a">3D</div>
<svg style="left:740px;top:125px;" width="18" height="18" viewBox="0 0 18 18"><g opacity="0.55"><rect x="2" y="4" width="14" height="10" rx="2" fill="#c8c8c6" stroke="#8f8f8c" stroke-width="0.8"/><rect x="6" y="2.5" width="6" height="2" fill="#aaa"/><circle cx="9" cy="9" r="3" fill="#a8d4f4" stroke="#8f8f8c" stroke-width="1"/></g><path d="M10 10 L16 16" stroke="#bbb" stroke-width="1.8"/></svg>
<div style="left:674px;top:126px;width:1px;height:17px;background:#fbfaf9"></div>
<div style="left:706px;top:126px;width:1px;height:17px;background:#fbfaf9"></div>
<div style="left:765px;top:126px;width:1px;height:17px;background:#fbfaf9"></div>
<div style="left:849px;top:126px;width:1px;height:17px;background:#fbfaf9"></div>
<div class="t" style="left:1137px;top:125px;height:18px;line-height:18px;font-size:13.4px"><b>&#187;</b>&#8202;RenderView1</div>
<div style="left:1238px;top:122px;width:23px;height:22px;border:1px solid #c4c0bb;border-radius:3px;background:linear-gradient(#fbfaf9,#eeeae6)"></div>
<div style="left:1265px;top:122px;width:23px;height:22px;border:1px solid #c4c0bb;border-radius:3px;background:linear-gradient(#fbfaf9,#eeeae6)"></div>
<div style="left:1292px;top:122px;width:23px;height:22px;border:1px solid #c4c0bb;border-radius:3px;background:linear-gradient(#fbfaf9,#eeeae6)"></div>
<div style="left:1319px;top:122px;width:23px;height:22px;border:1px solid #c4c0bb;border-radius:3px;background:linear-gradient(#fbfaf9,#eeeae6)"></div>
<svg style="left:1243px;top:127px;" width="14" height="14" viewBox="0 0 14 14"><rect x="0.5" y="0.5" width="13" height="13" fill="#c9d3ef" stroke="#8f8f8f" stroke-width="1"/><path d="M7 0 L7 14" stroke="#8f8f8f" stroke-width="1.2"/></svg>
<svg style="left:1270px;top:127px;" width="14" height="14" viewBox="0 0 14 14"><rect x="0.5" y="0.5" width="13" height="13" fill="#c9d3ef" stroke="#8f8f8f" stroke-width="1"/><path d="M0 7 L14 7" stroke="#8f8f8f" stroke-width="1.2"/></svg>
<svg style="left:1298px;top:128px;" width="12" height="12" viewBox="0 0 12 12"><rect x="1.5" y="1.5" width="9" height="9" fill="none" stroke="#000" stroke-width="1.3"/><rect x="1" y="1" width="10" height="2.2" fill="#000"/></svg>
<svg style="left:1325px;top:128px;" width="13" height="13" viewBox="0 0 13 13"><rect x="0.5" y="0.5" width="11.5" height="11.5" rx="2.5" fill="none" stroke="#777" stroke-width="1"/><path d="M3.5 3.5 L9 9 M9 3.5 L3.5 9" stroke="#555" stroke-width="1.6"/></svg>
<div style="left:622px;top:150px;width:720px;height:154px;background:#fff"></div>
<div style="left:623px;top:151px;width:718px;height:152px;background:#1a232d"></div>
<svg style="left:623px;top:151px;" width="718" height="152" viewBox="0 0 718 152"><defs><linearGradient id="bl" x1="0" y1="0" x2="1" y2="0"><stop offset="0" stop-color="#6f8c8a"/><stop offset="1" stop-color="#a9c9c4"/></linearGradient></defs><g transform="translate(359,76) rotate(0.0)"><path d="M-5.5 -36 L5.5 -36 L7 -68 L-7 -68 Z" fill="#81a09e"/></g><g transform="translate(359,76) rotate(22.5)"><path d="M-5.5 -36 L5.5 -36 L7 -68 L-7 -68 Z" fill="#8eaeab"/><path d="M2 -36 L5.5 -36 L7 -68 L3 -68 Z" fill="#4d6e3c"/></g><g transform="translate(359,76) rotate(45.0)"><path d="M-5.5 -36 L5.5 -36 L7 -68 L-7 -68 Z" fill="#99bbb6"/></g><g transform="translate(359,76) rotate(67.5)"><path d="M-5.5 -36 L5.5 -36 L7 -68 L-7 -68 Z" fill="#a0c3bd"/><path d="M-5.5 -36 L-2 -36 L-3 -68 L-7 -68 Z" fill="#4d6e3c"/></g><g transform="translate(359,76) rotate(90.0)"><path d="M-5.5 -36 L5.5 -36 L7 -68 L-7 -68 Z" fill="#a3c6c0"/></g><g transform="translate(359,76) rotate(112.5)"><path d="M-5.5 -36 L5.5 -36 L7 -68 L-7 -68 Z" fill="#a0c3bd"/><path d="M2 -36 L5.5 -36 L7 -68 L3 -68 Z" fill="#4d6e3c"/></g><g transform="translate(359,76) rotate(135.0)"><path d="M-5.5 -36 L5.5 -36 L7 -68 L-7 -68 Z" fill="#99bbb6"/></g><g transform="translate(359,76) rotate(157.5)"><path d="M-5.5 -36 L5.5 -36 L7 -68 L-7 -68 Z" fill="#8eaeab"/><path d="M-5.5 -36 L-2 -36 L-3 -68 L-7 -68 Z" fill="#4d6e3c"/></g><g transform="translate(359,76) rotate(180.0)"><path d="M-5.5 -36 L5.5 -36 L7 -68 L-7 -68 Z" fill="#81a09e"/></g><g transform="translate(359,76) rotate(202.5)"><path d="M-5.5 -36 L5.5 -36 L7 -68 L-7 -68 Z" fill="#739290"/><path d="M2 -36 L5.5 -36 L7 -68 L3 -68 Z" fill="#7fae58"/></g><g transform="translate(359,76) rotate(225.0)"><path d="M-5.5 -36 L5.5 -36 L7 -68 L-7 -68 Z" fill="#688585"/></g><g transform="translate(359,76) rotate(247.5)"><path d="M-5.5 -36 L5.5 -36 L7 -68 L-7 -68 Z" fill="#617d7e"/><path d="M-5.5 -36 L-2 -36 L-3 -68 L-7 -68 Z" fill="#7fae58"/></g><g transform="translate(359,76) rotate(270.0)"><path d="M-5.5 -36 L5.5 -36 L7 -68 L-7 -68 Z" fill="#5f7b7c"/></g><g transform="translate(359,76) rotate(292.5)"><path d="M-5.5 -36 L5.5 -36 L7 -68 L-7 -68 Z" fill="#617d7e"/><path d="M2 -36 L5.5 -36 L7 -68 L3 -68 Z" fill="#7fae58"/></g><g transform="translate(359,76) rotate(315.0)"><path d="M-5.5 -36 L5.5 -36 L7 -68 L-7 -68 Z" fill="#688585"/></g><g transform="translate(359,76) rotate(337.5)"><path d="M-5.5 -36 L5.5 -36 L7 -68 L-7 -68 Z" fill="#739290"/><path d="M-5.5 -36 L-2 -36 L-3 -68 L-7 -68 Z" fill="#7fae58"/></g><rect x="667" y="16.0" width="23" height="6" fill="#ffffff"/><rect x="667" y="26.5" width="23" height="6" fill="#ff0000"/><rect x="667" y="37.0" width="23" height="6" fill="#00ff00"/><rect x="667" y="47.4" width="23" height="6" fill="#0000ff"/><rect x="667" y="57.9" width="23" height="6" fill="#ffff00"/><rect x="667" y="68.4" width="23" height="6" fill="#ff00ff"/><rect x="667" y="78.9" width="23" height="6" fill="#00ffff"/><rect x="667" y="89.4" width="23" height="6" fill="#a0a0ff"/><rect x="667" y="99.8" width="23" height="6" fill="#a88a64"/><rect x="667" y="110.3" width="23" height="6" fill="#ff88c8"/><rect x="667" y="120.8" width="23" height="6" fill="#9060c0"/><rect x="667" y="131.3" width="23" height="6" fill="#ffc890"/><path d="M15 131 L15 124 M15 131 L22 130 M15 131 L12 133" stroke="#e8e040" stroke-width="1"/><path d="M15 131 L15 125" stroke="#40d040" stroke-width="1"/></svg>
<svg style="left:624px;top:313px;" width="18" height="18" viewBox="0 0 18 18"><g opacity="1"><rect x="2" y="4" width="14" height="10" rx="2" fill="#c8c8c6" stroke="#8f8f8c" stroke-width="0.8"/><rect x="6" y="2.5" width="6" height="2" fill="#aaa"/><circle cx="9" cy="9" r="3" fill="#a8d4f4" stroke="#8f8f8c" stroke-width="1"/></g><path d="M2 15 C2 11 9 11 8 16" fill="none" stroke="#e02020" stroke-width="1.8"/><path d="M0 13 L4 17 L1 17 Z" fill="#e02020"/></svg>
<svg style="left:650px;top:313px;" width="18" height="18" viewBox="0 0 18 18"><g opacity="0.55"><rect x="2" y="4" width="14" height="10" rx="2" fill="#c8c8c6" stroke="#8f8f8c" stroke-width="0.8"/><rect x="6" y="2.5" width="6" height="2" fill="#aaa"/><circle cx="9" cy="9" r="3" fill="#a8d4f4" stroke="#8f8f8c" stroke-width="1"/></g></svg>
<svg style="left:681px;top:313px;" width="18" height="18" viewBox="0 0 18 18"><path d="M1 4 L1 1 L4 1 M14 1 L17 1 L17 4 M1 14 L1 17 L4 17 M17 14 L17 17 L14 17" fill="none" stroke="#999" stroke-width="0.8"/><g opacity="1"><rect x="2" y="4" width="14" height="10" rx="2" fill="#c8c8c6" stroke="#8f8f8c" stroke-width="0.8"/><rect x="6" y="2.5" width="6" height="2" fill="#aaa"/><circle cx="9" cy="9" r="3" fill="#a8d4f4" stroke="#8f8f8c" stroke-width="1"/></g></svg>
<svg style="left:772px;top:313px;" width="18" height="18" viewBox="0 0 18 18"><rect x="1.5" y="1.5" width="15" height="15" fill="none" stroke="#888" stroke-width="0.8" stroke-dasharray="2 1.5"/><path d="M9 4 L9 14 M4 9 L14 9" stroke="#7cc060" stroke-width="3.2"/></svg>
<svg style="left:798px;top:313px;" width="18" height="18" viewBox="0 0 18 18"><rect x="1.5" y="1.5" width="15" height="15" fill="none" stroke="#888" stroke-width="0.8" stroke-dasharray="2 1.5"/><path d="M4 9 L14 9" stroke="#d02020" stroke-width="3"/></svg>
<svg style="left:823px;top:313px;" width="18" height="18" viewBox="0 0 18 18"><rect x="1.5" y="1.5" width="15" height="15" fill="none" stroke="#888" stroke-width="0.8" stroke-dasharray="2 1.5"/><path d="M7 3 L7 9 M4 6 L10 6" stroke="#7cc060" stroke-width="2.4"/><path d="M3 13 L10 13" stroke="#d02020" stroke-width="2.2"/><path d="M12 12 L16 16" stroke="#555" stroke-width="1.6"/></svg>
<svg style="left:856px;top:313px;" width="18" height="18" viewBox="0 0 18 18"><rect x="1.5" y="1.5" width="15" height="15" fill="none" stroke="#888" stroke-width="0.8" stroke-dasharray="2 1.5"/><path d="M3 14 L9 4 L15 14 Z" fill="#8fcf78" stroke="#5e9e4a" stroke-width="0.6"/><path d="M12 12 L16 16" stroke="#555" stroke-width="1.6"/></svg>
<svg style="left:882px;top:313px;" width="18" height="18" viewBox="0 0 18 18"><rect x="1.5" y="1.5" width="15" height="15" fill="none" stroke="#888" stroke-width="0.8" stroke-dasharray="2 1.5"/><path d="M3 14 L9 4 L15 14 Z" fill="none" stroke="#aaa" stroke-width="0.6"/><circle cx="9" cy="4" r="1.3" fill="#c03020"/><circle cx="3" cy="14" r="1.3" fill="#c03020"/><path d="M12 12 L16 16" stroke="#555" stroke-width="1.6"/></svg>
<svg style="left:909px;top:313px;" width="18" height="18" viewBox="0 0 18 18"><path d="M2 6 L8 3 L16 3 L16 11 L10 15 L2 15 Z" fill="#8fcf78" stroke="#5e9e4a" stroke-width="0.7"/><path d="M12 14 L15 17" stroke="#555" stroke-width="1.4"/></svg>
<svg style="left:934px;top:313px;" width="18" height="18" viewBox="0 0 18 18"><rect x="1.5" y="1.5" width="15" height="15" fill="none" stroke="#888" stroke-width="0.8" stroke-dasharray="2 1.5"/><circle cx="5" cy="5" r="1" fill="#d04030"/><circle cx="12" cy="4" r="1" fill="#d04030"/><circle cx="5" cy="12" r="1" fill="#d04030"/><circle cx="13" cy="11" r="1" fill="#d04030"/><path d="M12 12 L16 16" stroke="#555" stroke-width="1.6"/></svg>
<svg style="left:959px;top:313px;" width="18" height="18" viewBox="0 0 18 18"><rect x="1.5" y="1.5" width="15" height="15" fill="none" stroke="#888" stroke-width="0.8" stroke-dasharray="2 1.5"/><path d="M3 10 L12 4 L12 15 Z" fill="#8fcf78" stroke="#5e9e4a" stroke-width="0.6"/></svg>
<svg style="left:985px;top:313px;" width="18" height="18" viewBox="0 0 18 18"><circle cx="5" cy="5" r="1.6" fill="#b04030"/><circle cx="11" cy="4" r="1.6" fill="#b04030"/><circle cx="8" cy="9" r="1.6" fill="#b04030"/><circle cx="4" cy="12" r="1.6" fill="#b04030"/><circle cx="12" cy="13" r="1.6" fill="#b04030"/></svg>
<svg style="left:1012px;top:313px;" width="18" height="18" viewBox="0 0 18 18"><rect x="1.5" y="1.5" width="15" height="15" fill="none" stroke="#888" stroke-width="0.8" stroke-dasharray="2 1.5"/><circle cx="5" cy="5" r="2.2" fill="#2a8ed0"/><circle cx="5" cy="13" r="2.2" fill="#2a8ed0"/><circle cx="11" cy="10" r="3" fill="#8fcf78" stroke="#5e9e4a" stroke-width="0.6"/><path d="M13 13 L16 16" stroke="#555" stroke-width="1.6"/></svg>
<svg style="left:1039px;top:313px;" width="18" height="18" viewBox="0 0 18 18"><circle cx="7" cy="7" r="2.5" fill="#ddd" stroke="#bbb" stroke-width="0.6"/><path d="M9 9 L13 13" stroke="#bbb" stroke-width="1.4"/></svg>
<svg style="left:1064px;top:313px;" width="18" height="18" viewBox="0 0 18 18"><path d="M3 6 L7 2 L15 2 L15 12 L11 16 L3 16 Z" fill="#d8d7d3" stroke="#999" stroke-width="0.7"/><path d="M3 6 L11 6 L11 16 M11 6 L15 2" fill="none" stroke="#999" stroke-width="0.7"/><path d="M12 12 L16 16" stroke="#777" stroke-width="1.4"/></svg>
<svg style="left:1091px;top:313px;" width="18" height="18" viewBox="0 0 18 18"><path d="M2 14 L8 4 L14 14 Z" fill="#8fcf78" stroke="#5e9e4a" stroke-width="0.7"/><path d="M12 12 L16 16" stroke="#555" stroke-width="1.6"/></svg>
<div class="t" style="left:716px;top:314px;height:16px;line-height:16px;font-size:12px;font-weight:bold;color:#6f705a">3D</div>
<svg style="left:740px;top:313px;" width="18" height="18" viewBox="0 0 18 18"><g opacity="0.55"><rect x="2" y="4" width="14" height="10" rx="2" fill="#c8c8c6" stroke="#8f8f8c" stroke-width="0.8"/><rect x="6" y="2.5" width="6" height="2" fill="#aaa"/><circle cx="9" cy="9" r="3" fill="#a8d4f4" stroke="#8f8f8c" stroke-width="1"/></g><path d="M10 10 L16 16" stroke="#bbb" stroke-width="1.8"/></svg>
<div style="left:674px;top:314px;width:1px;height:17px;background:#fbfaf9"></div>
<div style="left:706px;top:314px;width:1px;height:17px;background:#fbfaf9"></div>
<div style="left:765px;top:314px;width:1px;height:17px;background:#fbfaf9"></div>
<div style="left:849px;top:314px;width:1px;height:17px;background:#fbfaf9"></div>
<div class="t" style="left:1137px;top:313px;height:18px;line-height:18px;font-size:13.4px"><b>&#187;</b>&#8202;RenderView4</div>
<div style="left:1238px;top:310px;width:23px;height:22px;border:1px solid #c4c0bb;border-radius:3px;background:linear-gradient(#fbfaf9,#eeeae6)"></div>
<div style="left:1265px;top:310px;width:23px;height:22px;border:1px solid #c4c0bb;border-radius:3px;background:linear-gradient(#fbfaf9,#eeeae6)"></div>
<div style="left:1292px;top:310px;width:23px;height:22px;border:1px solid #c4c0bb;border-radius:3px;background:linear-gradient(#fbfaf9,#eeeae6)"></div>
<div style="left:1319px;top:310px;width:23px;height:22px;border:1px solid #c4c0bb;border-radius:3px;background:linear-gradient(#fbfaf9,#eeeae6)"></div>
<svg style="left:1243px;top:315px;" width="14" height="14" viewBox="0 0 14 14"><rect x="0.5" y="0.5" width="13" height="13" fill="#c9d3ef" stroke="#8f8f8f" stroke-width="1"/><path d="M7 0 L7 14" stroke="#8f8f8f" stroke-width="1.2"/></svg>
<svg style="left:1270px;top:315px;" width="14" height="14" viewBox="0 0 14 14"><rect x="0.5" y="0.5" width="13" height="13" fill="#c9d3ef" stroke="#8f8f8f" stroke-width="1"/><path d="M0 7 L14 7" stroke="#8f8f8f" stroke-width="1.2"/></svg>
<svg style="left:1298px;top:316px;" width="12" height="12" viewBox="0 0 12 12"><rect x="1.5" y="1.5" width="9" height="9" fill="none" stroke="#000" stroke-width="1.3"/><rect x="1" y="1" width="10" height="2.2" fill="#000"/></svg>
<svg style="left:1325px;top:316px;" width="13" height="13" viewBox="0 0 13 13"><rect x="0.5" y="0.5" width="11.5" height="11.5" rx="2.5" fill="none" stroke="#777" stroke-width="1"/><path d="M3.5 3.5 L9 9 M9 3.5 L3.5 9" stroke="#555" stroke-width="1.6"/></svg>
<div style="left:622px;top:338px;width:720px;height:588px;background:#fff"></div>
<div style="left:623px;top:339px;width:718px;height:586px;background:#1a232d"></div>
<svg style="left:623px;top:339px;" width="718" height="586" viewBox="0 0 718 586"><defs><radialGradient id="bg4" gradientUnits="userSpaceOnUse" cx="-23" cy="-299" r="980"><stop offset="0" stop-color="#500808"/><stop offset="0.384" stop-color="#5a0a08"/><stop offset="0.418" stop-color="#7a3020"/><stop offset="0.454" stop-color="#9a6040"/><stop offset="0.498" stop-color="#ad9c6c"/><stop offset="0.541" stop-color="#6a8a4a"/><stop offset="0.577" stop-color="#2a6a2a"/><stop offset="0.613" stop-color="#135219"/><stop offset="0.64" stop-color="#17352e"/><stop offset="0.667" stop-color="#0f2f55"/><stop offset="0.693" stop-color="#12406e"/><stop offset="0.722" stop-color="#1d5688"/><stop offset="0.752" stop-color="#2c6696"/><stop offset="0.792" stop-color="#4a7598"/><stop offset="0.838" stop-color="#6a88a0"/><stop offset="0.9" stop-color="#8a9aa8"/><stop offset="1" stop-color="#9aa6ae"/></radialGradient><linearGradient id="cbar" x1="0" y1="0" x2="0" y2="1"><stop offset="0" stop-color="#6b0a0a"/><stop offset="0.08" stop-color="#b04a38"/><stop offset="0.155" stop-color="#d07a58"/><stop offset="0.23" stop-color="#dcaa7a"/><stop offset="0.31" stop-color="#e8dca4"/><stop offset="0.345" stop-color="#dce4b0"/><stop offset="0.385" stop-color="#a8c888"/><stop offset="0.46" stop-color="#5aa050"/><stop offset="0.535" stop-color="#2a7a30"/><stop offset="0.6" stop-color="#1a5a30"/><stop offset="0.65" stop-color="#1a4258"/><stop offset="0.69" stop-color="#1a3f72"/><stop offset="0.765" stop-color="#1c5c9c"/><stop offset="0.84" stop-color="#3a8ac8"/><stop offset="0.92" stop-color="#90c0e8"/><stop offset="1" stop-color="#eaf2fb"/></linearGradient><linearGradient id="cyl" x1="0" y1="0" x2="1" y2="0"><stop offset="0" stop-color="#7e8a90"/><stop offset="0.5" stop-color="#a9b3b8"/><stop offset="1" stop-color="#8c979d"/></linearGradient></defs><path d="M181.0 17.0 L444.0 18.0 C448.0 111.0 454.0 221.0 450.0 341.0 C445.0 461.0 432.0 541.0 423.0 569.0 C407.0 561.0 387.0 556.0 377.0 549.0 L247.0 523.0 L190.0 519.0 C185.0 421.0 175.0 321.0 178.0 221.0 C179.0 131.0 181.0 61.0 181.0 17.0 Z" fill="url(#bg4)"/><linearGradient id="te" x1="0" y1="0" x2="0" y2="1"><stop offset="0" stop-color="#b5cad8" stop-opacity="0"/><stop offset="1" stop-color="#b5cad8" stop-opacity="0.8"/></linearGradient><path d="M452.0 221.0 C451.0 421.0 441.0 511.0 423.0 569.0 L419.0 567.0 C436.0 511.0 446.0 421.0 448.0 221.0 Z" fill="url(#te)"/><path d="M247.0 523.0 L247.0 549.0 C257.0 571.0 372.0 571.0 377.0 551.0 L377.0 527.0 Z" fill="url(#cyl)"/><path d="M250.0 518.0 C267.0 511.0 352.0 513.0 377.0 527.0 C367.0 537.0 257.0 537.0 247.0 527.0 Z" fill="#9ca6ab"/><rect x="560" y="65" width="23" height="470" fill="url(#cbar)"/><rect x="579" y="498.8" width="14" height="1.6" fill="#fff"/><text x="598.5" y="507.1" font-family="Liberation Sans" font-size="20" fill="#fbf8f0" stroke="#fbf8f0" stroke-width="0.45">1e-5</text><rect x="579" y="462.9" width="14" height="1.6" fill="#fff"/><text x="598.5" y="471.2" font-family="Liberation Sans" font-size="20" fill="#fbf8f0" stroke="#fbf8f0" stroke-width="0.45">2e-5</text><rect x="579" y="427.0" width="14" height="1.6" fill="#fff"/><text x="598.5" y="435.3" font-family="Liberation Sans" font-size="20" fill="#fbf8f0" stroke="#fbf8f0" stroke-width="0.45">3e-5</text><rect x="579" y="391.1" width="14" height="1.6" fill="#fff"/><text x="598.5" y="399.4" font-family="Liberation Sans" font-size="20" fill="#fbf8f0" stroke="#fbf8f0" stroke-width="0.45">4e-5</text><rect x="579" y="355.2" width="14" height="1.6" fill="#fff"/><text x="598.5" y="363.5" font-family="Liberation Sans" font-size="20" fill="#fbf8f0" stroke="#fbf8f0" stroke-width="0.45">5e-5</text><rect x="579" y="319.3" width="14" height="1.6" fill="#fff"/><text x="598.5" y="327.6" font-family="Liberation Sans" font-size="20" fill="#fbf8f0" stroke="#fbf8f0" stroke-width="0.45">6e-5</text><rect x="579" y="283.4" width="14" height="1.6" fill="#fff"/><text x="598.5" y="291.7" font-family="Liberation Sans" font-size="20" fill="#fbf8f0" stroke="#fbf8f0" stroke-width="0.45">7e-5</text><rect x="579" y="247.5" width="14" height="1.6" fill="#fff"/><text x="598.5" y="255.8" font-family="Liberation Sans" font-size="20" fill="#fbf8f0" stroke="#fbf8f0" stroke-width="0.45">8e-5</text><rect x="579" y="211.6" width="14" height="1.6" fill="#fff"/><text x="598.5" y="219.9" font-family="Liberation Sans" font-size="20" fill="#fbf8f0" stroke="#fbf8f0" stroke-width="0.45">9e-5</text><rect x="579" y="175.7" width="14" height="1.6" fill="#fff"/><text x="598.5" y="184.0" font-family="Liberation Sans" font-size="20" fill="#fbf8f0" stroke="#fbf8f0" stroke-width="0.45">0.0001</text><rect x="579" y="139.8" width="14" height="1.6" fill="#fff"/><text x="598.5" y="148.1" font-family="Liberation Sans" font-size="20" fill="#fbf8f0" stroke="#fbf8f0" stroke-width="0.45">0.00011</text><rect x="579" y="103.9" width="14" height="1.6" fill="#fff"/><text x="598.5" y="112.2" font-family="Liberation Sans" font-size="20" fill="#fbf8f0" stroke="#fbf8f0" stroke-width="0.45">0.00012</text><text x="598.5" y="72.9" font-family="Liberation Sans" font-size="20" fill="#fbf8f0" stroke="#fbf8f0" stroke-width="0.45">1.3e-04</text><rect x="560" y="64.6" width="122" height="1.6" fill="#fff"/><text x="598.5" y="542.7" font-family="Liberation Sans" font-size="20" fill="#fbf8f0" stroke="#fbf8f0" stroke-width="0.45">0.0e+00</text><rect x="560" y="534.4" width="122" height="1.6" fill="#fff"/><text transform="translate(699,300) rotate(-90)" text-anchor="middle" font-family="Liberation Sans" font-weight="bold" font-size="24.5" fill="#fbf8f0">Displacement (m)</text><path d="M73.0 509.0 L73.0 476.0" stroke="#30d030" stroke-width="1.5"/><path d="M69.0 479.0 L73.0 471.0 L77.0 479.0 Z" fill="#30d030"/><path d="M73.0 509.0 L99.0 505.0" stroke="#e8e040" stroke-width="1.5"/><path d="M73.0 509.0 L93.0 516.0" stroke="#e02020" stroke-width="1.5"/><circle cx="93" cy="516" r="3" fill="#d02020"/><text x="76" y="481" font-family="Liberation Sans" font-size="10" fill="#ddd">Z</text><text x="99" y="510" font-family="Liberation Sans" font-size="10" fill="#ddd">Y</text><text x="96" y="518" font-family="Liberation Sans" font-size="10" fill="#ddd">X</text></svg>
<svg style="left:1352px;top:125px;" width="18" height="18" viewBox="0 0 18 18"><path d="M1 4 L1 1 L4 1 M14 1 L17 1 L17 4 M1 14 L1 17 L4 17 M17 14 L17 17 L14 17" fill="none" stroke="#999" stroke-width="0.8"/><g opacity="0.55"><rect x="2" y="4" width="14" height="10" rx="2" fill="#c8c8c6" stroke="#8f8f8c" stroke-width="0.8"/><rect x="6" y="2.5" width="6" height="2" fill="#aaa"/><circle cx="9" cy="9" r="3" fill="#a8d4f4" stroke="#8f8f8c" stroke-width="1"/></g></svg>
<div style="left:1380px;top:126px;width:1px;height:17px;background:#fbfaf9"></div>
<div class="t" style="left:1392px;top:125px;height:18px;line-height:18px;font-size:13.4px"><b>&#187;</b>&#8202;LineChartView2</div>
<div style="left:1509px;top:122px;width:23px;height:22px;border:1px solid #c4c0bb;border-radius:3px;background:linear-gradient(#fbfaf9,#eeeae6)"></div>
<div style="left:1536px;top:122px;width:23px;height:22px;border:1px solid #c4c0bb;border-radius:3px;background:linear-gradient(#fbfaf9,#eeeae6)"></div>
<div style="left:1563px;top:122px;width:23px;height:22px;border:1px solid #c4c0bb;border-radius:3px;background:linear-gradient(#fbfaf9,#eeeae6)"></div>
<div style="left:1590px;top:122px;width:23px;height:22px;border:1px solid #c4c0bb;border-radius:3px;background:linear-gradient(#fbfaf9,#eeeae6)"></div>
<svg style="left:1514px;top:127px;" width="14" height="14" viewBox="0 0 14 14"><rect x="0.5" y="0.5" width="13" height="13" fill="#c9d3ef" stroke="#8f8f8f" stroke-width="1"/><path d="M7 0 L7 14" stroke="#8f8f8f" stroke-width="1.2"/></svg>
<svg style="left:1541px;top:127px;" width="14" height="14" viewBox="0 0 14 14"><rect x="0.5" y="0.5" width="13" height="13" fill="#c9d3ef" stroke="#8f8f8f" stroke-width="1"/><path d="M0 7 L14 7" stroke="#8f8f8f" stroke-width="1.2"/></svg>
<svg style="left:1569px;top:128px;" width="12" height="12" viewBox="0 0 12 12"><rect x="1.5" y="1.5" width="9" height="9" fill="none" stroke="#000" stroke-width="1.3"/><rect x="1" y="1" width="10" height="2.2" fill="#000"/></svg>
<svg style="left:1596px;top:128px;" width="13" height="13" viewBox="0 0 13 13"><rect x="0.5" y="0.5" width="11.5" height="11.5" rx="2.5" fill="none" stroke="#777" stroke-width="1"/><path d="M3.5 3.5 L9 9 M9 3.5 L3.5 9" stroke="#555" stroke-width="1.6"/></svg>
<div style="left:1350px;top:150px;width:262px;height:244px;background:#fff"></div>
<svg style="left:1350px;top:150px;" width="262" height="244" viewBox="0 0 262 244"><line x1="78" y1="26.599999999999994" x2="242" y2="26.599999999999994" stroke="#ebebeb" stroke-width="1"/><line x1="78" y1="39.400000000000006" x2="242" y2="39.400000000000006" stroke="#ebebeb" stroke-width="1"/><line x1="78" y1="51" x2="242" y2="51" stroke="#ebebeb" stroke-width="1"/><line x1="78" y1="68.30000000000001" x2="242" y2="68.30000000000001" stroke="#ebebeb" stroke-width="1"/><line x1="78" y1="81" x2="242" y2="81" stroke="#ebebeb" stroke-width="1"/><line x1="78" y1="94.4" x2="242" y2="94.4" stroke="#ebebeb" stroke-width="1"/><line x1="78" y1="110" x2="242" y2="110" stroke="#ebebeb" stroke-width="1"/><line x1="78" y1="122.69999999999999" x2="242" y2="122.69999999999999" stroke="#ebebeb" stroke-width="1"/><line x1="78" y1="136" x2="242" y2="136" stroke="#ebebeb" stroke-width="1"/><line x1="78" y1="152.8" x2="242" y2="152.8" stroke="#ebebeb" stroke-width="1"/><line x1="78" y1="165.5" x2="242" y2="165.5" stroke="#ebebeb" stroke-width="1"/><line x1="78" y1="35" x2="242" y2="35" stroke="#f5f5f5" stroke-width="1"/><line x1="78" y1="41" x2="242" y2="41" stroke="#f5f5f5" stroke-width="1"/><line x1="78" y1="45" x2="242" y2="45" stroke="#f5f5f5" stroke-width="1"/><line x1="78" y1="77" x2="242" y2="77" stroke="#f5f5f5" stroke-width="1"/><line x1="78" y1="85" x2="242" y2="85" stroke="#f5f5f5" stroke-width="1"/><line x1="78" y1="118" x2="242" y2="118" stroke="#f5f5f5" stroke-width="1"/><line x1="78" y1="128" x2="242" y2="128" stroke="#f5f5f5" stroke-width="1"/><line x1="78" y1="159" x2="242" y2="159" stroke="#f5f5f5" stroke-width="1"/><line x1="106.5" y1="26" x2="106.5" y2="197" stroke="#ececec" stroke-width="1"/><line x1="224.5" y1="26" x2="224.5" y2="197" stroke="#ececec" stroke-width="1"/><path d="M77.5,26.0 L77.5,197.5 L242.0,197.5" fill="none" stroke="#666" stroke-width="1"/><line x1="73" y1="26.599999999999994" x2="77" y2="26.599999999999994" stroke="#555" stroke-width="1"/><text x="72" y="31.599999999999994" text-anchor="end" font-family="Liberation Sans" font-size="14.5" fill="#333">0.2</text><line x1="73" y1="39.400000000000006" x2="77" y2="39.400000000000006" stroke="#555" stroke-width="1"/><text x="72" y="44.400000000000006" text-anchor="end" font-family="Liberation Sans" font-size="14.5" fill="#333">0.1</text><line x1="73" y1="51" x2="77" y2="51" stroke="#555" stroke-width="1"/><text x="72" y="56" text-anchor="end" font-family="Liberation Sans" font-size="14.5" fill="#333">0.05</text><line x1="73" y1="68.30000000000001" x2="77" y2="68.30000000000001" stroke="#555" stroke-width="1"/><text x="72" y="73.30000000000001" text-anchor="end" font-family="Liberation Sans" font-size="14.5" fill="#333">0.02</text><line x1="73" y1="81" x2="77" y2="81" stroke="#555" stroke-width="1"/><text x="72" y="86" text-anchor="end" font-family="Liberation Sans" font-size="14.5" fill="#333">0.01</text><line x1="73" y1="94.4" x2="77" y2="94.4" stroke="#555" stroke-width="1"/><text x="72" y="99.4" text-anchor="end" font-family="Liberation Sans" font-size="14.5" fill="#333">0.005</text><line x1="73" y1="110" x2="77" y2="110" stroke="#555" stroke-width="1"/><text x="72" y="115" text-anchor="end" font-family="Liberation Sans" font-size="14.5" fill="#333">0.002</text><line x1="73" y1="122.69999999999999" x2="77" y2="122.69999999999999" stroke="#555" stroke-width="1"/><text x="72" y="127.69999999999999" text-anchor="end" font-family="Liberation Sans" font-size="14.5" fill="#333">0.001</text><line x1="73" y1="136" x2="77" y2="136" stroke="#555" stroke-width="1"/><text x="72" y="141" text-anchor="end" font-family="Liberation Sans" font-size="14.5" fill="#333">0.0005</text><line x1="73" y1="152.8" x2="77" y2="152.8" stroke="#555" stroke-width="1"/><text x="72" y="157.8" text-anchor="end" font-family="Liberation Sans" font-size="14.5" fill="#333">0.0002</text><line x1="73" y1="165.5" x2="77" y2="165.5" stroke="#555" stroke-width="1"/><text x="72" y="170.5" text-anchor="end" font-family="Liberation Sans" font-size="14.5" fill="#333">0.0001</text><line x1="74" y1="35" x2="77" y2="35" stroke="#777" stroke-width="0.7"/><line x1="74" y1="37" x2="77" y2="37" stroke="#777" stroke-width="0.7"/><line x1="74" y1="41" x2="77" y2="41" stroke="#777" stroke-width="0.7"/><line x1="74" y1="43" x2="77" y2="43" stroke="#777" stroke-width="0.7"/><line x1="74" y1="77" x2="77" y2="77" stroke="#777" stroke-width="0.7"/><line x1="74" y1="79" x2="77" y2="79" stroke="#777" stroke-width="0.7"/><line x1="74" y1="83" x2="77" y2="83" stroke="#777" stroke-width="0.7"/><line x1="74" y1="85" x2="77" y2="85" stroke="#777" stroke-width="0.7"/><line x1="74" y1="118" x2="77" y2="118" stroke="#777" stroke-width="0.7"/><line x1="74" y1="120" x2="77" y2="120" stroke="#777" stroke-width="0.7"/><line x1="74" y1="126" x2="77" y2="126" stroke="#777" stroke-width="0.7"/><line x1="74" y1="128" x2="77" y2="128" stroke="#777" stroke-width="0.7"/><line x1="74" y1="130" x2="77" y2="130" stroke="#777" stroke-width="0.7"/><line x1="74" y1="159" x2="77" y2="159" stroke="#777" stroke-width="0.7"/><line x1="74" y1="161" x2="77" y2="161" stroke="#777" stroke-width="0.7"/><text x="106.5" y="214" text-anchor="middle" font-family="Liberation Sans" font-size="14.5" fill="#333">6500</text><text x="224.5" y="214" text-anchor="middle" font-family="Liberation Sans" font-size="14.5" fill="#333">7000</text><text x="160" y="234" text-anchor="middle" font-family="Liberation Sans" font-weight="bold" font-size="18" fill="#111">iterations</text><text transform="translate(21,109) rotate(-90)" text-anchor="middle" font-family="Liberation Sans" font-weight="bold" font-size="18" fill="#111">residuals</text><text x="160" y="21" text-anchor="middle" font-family="Liberation Sans" font-weight="bold" font-size="19.5" fill="#111">CFD Residuals</text><path d="M77.8 61.3 C78.9 61.6 81.9 63.3 84.2 63.4 C86.4 63.5 88.9 61.9 91.2 62.0 C93.6 62.1 96.2 63.5 98.3 64.1 C100.5 64.7 102.1 65.4 104.0 65.5 C105.9 65.7 107.8 64.7 109.7 64.8 C111.5 64.9 113.4 66.5 115.3 66.2 C117.2 66.0 118.9 64.2 121.0 63.4 C123.1 62.6 125.9 61.4 128.1 61.3 C130.2 61.2 131.6 62.8 133.7 62.7 C135.9 62.6 138.1 60.7 140.8 60.9 C143.5 61.0 148.5 63.0 150.0 63.4" fill="none" stroke="#3b7cc4" stroke-width="1.6"/><path d="M77.8 103.8 C78.4 104.1 79.8 105.7 81.3 105.9 C82.9 106.1 84.9 105.4 87.0 105.2 C89.1 105.0 91.5 104.0 94.1 104.5 C96.7 105.0 100.2 107.6 102.6 108.0 C104.9 108.5 105.9 108.1 108.2 107.3 C110.6 106.5 114.4 103.4 116.7 103.1 C119.1 102.7 120.3 105.2 122.4 105.2 C124.5 105.2 127.1 103.4 129.5 103.1 C131.9 102.7 134.2 103.5 136.6 103.1 C138.9 102.6 141.4 99.9 143.7 100.2 C145.9 100.6 149.0 104.4 150.0 105.2" fill="none" stroke="#111" stroke-width="1.7"/><path d="M77.8 109.4 C78.6 110.0 81.2 112.2 82.7 113.0 C84.3 113.8 85.3 114.5 87.0 114.4 C88.6 114.4 90.8 112.9 92.7 112.7 C94.6 112.5 96.2 112.4 98.3 113.0 C100.5 113.6 103.3 116.3 105.4 116.5 C107.5 116.8 108.7 114.8 111.1 114.4 C113.4 114.1 117.0 114.6 119.6 114.4 C122.2 114.2 124.3 113.3 126.7 113.3 C129.0 113.2 131.4 114.2 133.7 114.1 C136.1 114.0 138.1 112.7 140.8 112.7 C143.5 112.8 148.5 114.1 150.0 114.4" fill="none" stroke="#a5532e" stroke-width="1.6"/><path d="M77.8 123.6 C78.9 124.0 81.9 125.3 84.2 125.7 C86.4 126.2 88.4 126.0 91.2 126.4 C94.1 126.9 97.9 128.3 101.2 128.6 C104.5 128.8 108.2 128.3 111.1 127.9 C113.9 127.4 115.6 126.3 118.2 125.7 C120.8 125.1 123.8 124.7 126.7 124.3 C129.5 124.0 132.3 123.8 135.2 123.6 C138.0 123.4 141.2 122.7 143.7 123.2 C146.1 123.7 149.0 125.9 150.0 126.4" fill="none" stroke="#9449b0" stroke-width="1.6"/><path d="M77.8 132.8 C78.6 133.3 81.0 135.3 82.7 135.7 C84.5 136.0 86.3 134.9 88.4 134.9 C90.5 134.9 92.9 135.2 95.5 135.7 C98.1 136.1 101.4 137.5 104.0 137.8 C106.6 138.0 109.0 137.4 111.1 137.1 C113.2 136.7 114.1 136.1 116.7 135.7 C119.3 135.2 123.8 134.4 126.7 134.2 C129.5 134.1 131.1 134.9 133.7 134.9 C136.3 134.9 139.5 133.9 142.2 134.2 C145.0 134.5 148.7 136.4 150.0 136.8" fill="none" stroke="#f27a14" stroke-width="1.6"/><path d="M77.8 180.3 C80.0 180.4 87.4 180.7 91.2 181.0 C95.1 181.2 97.6 181.7 101.2 181.7 C104.7 181.7 106.6 181.4 112.5 181.0 C118.4 180.5 130.4 178.9 136.6 178.9 C142.7 178.9 144.4 180.3 149.3 181.0 C154.3 181.7 160.7 183.1 166.3 183.1 C172.0 183.1 178.1 181.9 183.3 181.3 C188.5 180.7 190.4 180.0 197.5 179.6 C204.6 179.1 218.4 178.3 225.8 178.4 C233.2 178.5 239.4 180.0 242.1 180.3" fill="none" stroke="#d42828" stroke-width="1.3"/><rect x="150.5" y="24.5" width="91.5" height="125.5" fill="#fff" stroke="#888" stroke-width="1"/><line x1="155" y1="37" x2="177" y2="37" stroke="#111" stroke-width="1.8"/><text x="180" y="42.5" font-family="Liberation Sans" font-weight="bold" font-size="16" fill="#111">k</text><line x1="155" y1="57" x2="177" y2="57" stroke="#d42828" stroke-width="1.8"/><text x="180" y="62.5" font-family="Liberation Sans" font-weight="bold" font-size="16" fill="#111">omega</text><line x1="155" y1="77" x2="177" y2="77" stroke="#3b7cc4" stroke-width="1.8"/><text x="180" y="82.5" font-family="Liberation Sans" font-weight="bold" font-size="16" fill="#111">p</text><line x1="155" y1="97" x2="177" y2="97" stroke="#9449b0" stroke-width="1.8"/><text x="180" y="102.5" font-family="Liberation Sans" font-weight="bold" font-size="16" fill="#111">Ux</text><line x1="155" y1="117" x2="177" y2="117" stroke="#f27a14" stroke-width="1.8"/><text x="180" y="122.5" font-family="Liberation Sans" font-weight="bold" font-size="16" fill="#111">Uy</text><line x1="155" y1="137" x2="177" y2="137" stroke="#a5532e" stroke-width="1.8"/><text x="180" y="142.5" font-family="Liberation Sans" font-weight="bold" font-size="16" fill="#111">Uz</text></svg>
<svg style="left:1352px;top:404px;" width="18" height="18" viewBox="0 0 18 18"><path d="M1 4 L1 1 L4 1 M14 1 L17 1 L17 4 M1 14 L1 17 L4 17 M17 14 L17 17 L14 17" fill="none" stroke="#999" stroke-width="0.8"/><g opacity="0.55"><rect x="2" y="4" width="14" height="10" rx="2" fill="#c8c8c6" stroke="#8f8f8c" stroke-width="0.8"/><rect x="6" y="2.5" width="6" height="2" fill="#aaa"/><circle cx="9" cy="9" r="3" fill="#a8d4f4" stroke="#8f8f8c" stroke-width="1"/></g></svg>
<div style="left:1380px;top:405px;width:1px;height:17px;background:#fbfaf9"></div>
<div class="t" style="left:1392px;top:404px;height:18px;line-height:18px;font-size:13.4px"><b>&#187;</b>&#8202;LineChartView1</div>
<div style="left:1509px;top:402px;width:23px;height:22px;border:1px solid #c4c0bb;border-radius:3px;background:linear-gradient(#fbfaf9,#eeeae6)"></div>
<div style="left:1536px;top:402px;width:23px;height:22px;border:1px solid #c4c0bb;border-radius:3px;background:linear-gradient(#fbfaf9,#eeeae6)"></div>
<div style="left:1563px;top:402px;width:23px;height:22px;border:1px solid #c4c0bb;border-radius:3px;background:linear-gradient(#fbfaf9,#eeeae6)"></div>
<div style="left:1590px;top:402px;width:23px;height:22px;border:1px solid #c4c0bb;border-radius:3px;background:linear-gradient(#fbfaf9,#eeeae6)"></div>
<svg style="left:1514px;top:407px;" width="14" height="14" viewBox="0 0 14 14"><rect x="0.5" y="0.5" width="13" height="13" fill="#c9d3ef" stroke="#8f8f8f" stroke-width="1"/><path d="M7 0 L7 14" stroke="#8f8f8f" stroke-width="1.2"/></svg>
<svg style="left:1541px;top:407px;" width="14" height="14" viewBox="0 0 14 14"><rect x="0.5" y="0.5" width="13" height="13" fill="#c9d3ef" stroke="#8f8f8f" stroke-width="1"/><path d="M0 7 L14 7" stroke="#8f8f8f" stroke-width="1.2"/></svg>
<svg style="left:1569px;top:408px;" width="12" height="12" viewBox="0 0 12 12"><rect x="1.5" y="1.5" width="9" height="9" fill="none" stroke="#000" stroke-width="1.3"/><rect x="1" y="1" width="10" height="2.2" fill="#000"/></svg>
<svg style="left:1596px;top:408px;" width="13" height="13" viewBox="0 0 13 13"><rect x="0.5" y="0.5" width="11.5" height="11.5" rx="2.5" fill="none" stroke="#777" stroke-width="1"/><path d="M3.5 3.5 L9 9 M9 3.5 L3.5 9" stroke="#555" stroke-width="1.6"/></svg>
<div style="left:1350px;top:429px;width:262px;height:497px;background:#fff"></div>
<svg style="left:1350px;top:429px;" width="262" height="497" viewBox="0 0 262 497"><line x1="62" y1="68.9" x2="242" y2="68.9" stroke="#ececec" stroke-width="1"/><line x1="57" y1="68.9" x2="62" y2="68.9" stroke="#555" stroke-width="1"/><text x="55" y="73.9" text-anchor="end" font-family="Liberation Sans" font-size="14" fill="#333">0.88</text><line x1="62" y1="118.4" x2="242" y2="118.4" stroke="#ececec" stroke-width="1"/><line x1="57" y1="118.4" x2="62" y2="118.4" stroke="#555" stroke-width="1"/><text x="55" y="123.4" text-anchor="end" font-family="Liberation Sans" font-size="14" fill="#333">0.87</text><line x1="62" y1="167.9" x2="242" y2="167.9" stroke="#ececec" stroke-width="1"/><line x1="57" y1="167.9" x2="62" y2="167.9" stroke="#555" stroke-width="1"/><text x="55" y="172.9" text-anchor="end" font-family="Liberation Sans" font-size="14" fill="#333">0.86</text><line x1="62" y1="217.4" x2="242" y2="217.4" stroke="#ececec" stroke-width="1"/><line x1="57" y1="217.4" x2="62" y2="217.4" stroke="#555" stroke-width="1"/><text x="55" y="222.4" text-anchor="end" font-family="Liberation Sans" font-size="14" fill="#333">0.85</text><line x1="62" y1="266.9" x2="242" y2="266.9" stroke="#ececec" stroke-width="1"/><line x1="57" y1="266.9" x2="62" y2="266.9" stroke="#555" stroke-width="1"/><text x="55" y="271.9" text-anchor="end" font-family="Liberation Sans" font-size="14" fill="#333">0.84</text><line x1="62" y1="316.4" x2="242" y2="316.4" stroke="#ececec" stroke-width="1"/><line x1="57" y1="316.4" x2="62" y2="316.4" stroke="#555" stroke-width="1"/><text x="55" y="321.4" text-anchor="end" font-family="Liberation Sans" font-size="14" fill="#333">0.83</text><line x1="62" y1="365.9" x2="242" y2="365.9" stroke="#ececec" stroke-width="1"/><line x1="57" y1="365.9" x2="62" y2="365.9" stroke="#555" stroke-width="1"/><text x="55" y="370.9" text-anchor="end" font-family="Liberation Sans" font-size="14" fill="#333">0.82</text><line x1="62" y1="415.4" x2="242" y2="415.4" stroke="#ececec" stroke-width="1"/><line x1="57" y1="415.4" x2="62" y2="415.4" stroke="#555" stroke-width="1"/><text x="55" y="420.4" text-anchor="end" font-family="Liberation Sans" font-size="14" fill="#333">0.81</text><line x1="102.79999999999995" y1="69" x2="102.79999999999995" y2="450" stroke="#ececec" stroke-width="1"/><text x="102.79999999999995" y="465" text-anchor="middle" font-family="Liberation Sans" font-size="14" fill="#333">6000</text><line x1="165" y1="69" x2="165" y2="450" stroke="#ececec" stroke-width="1"/><text x="165" y="465" text-anchor="middle" font-family="Liberation Sans" font-size="14" fill="#333">6500</text><line x1="225.79999999999995" y1="69" x2="225.79999999999995" y2="450" stroke="#ececec" stroke-width="1"/><text x="225.79999999999995" y="465" text-anchor="middle" font-family="Liberation Sans" font-size="14" fill="#333">7000</text><path d="M61.5,69.0 L61.5,450.0 L242.5,450.0" fill="none" stroke="#666" stroke-width="1"/><text x="152" y="488" text-anchor="middle" font-family="Liberation Sans" font-weight="bold" font-size="18.5" fill="#111">iterations</text><text transform="translate(22,236) rotate(-90)" text-anchor="middle" font-family="Liberation Sans" font-weight="bold" font-size="18.5" fill="#111">quantity</text><text x="153" y="21" text-anchor="middle" font-family="Liberation Sans" font-weight="bold" font-size="20" fill="#111">CFD Quantity monitor</text><path d="M61.9 265.3 C62.9 249.4 66.2 176.7 67.9 170.0 C69.5 163.4 70.5 213.0 71.8 225.6 C73.1 238.2 74.5 252.1 75.8 245.4 C77.1 238.8 78.4 178.6 79.8 185.9 C81.1 193.2 82.4 275.5 83.7 289.1 C85.1 302.7 86.4 275.9 87.7 267.3 C89.0 258.7 90.3 234.5 91.7 237.5 C93.0 240.5 94.5 287.8 95.6 285.1 C96.8 282.5 97.4 217.7 98.4 221.6 C99.4 225.6 100.6 296.7 101.6 308.9 C102.6 321.2 103.2 288.1 104.4 295.0 C105.5 302.0 106.3 368.8 108.3 350.6 C110.4 332.4 114.5 181.6 116.7 185.9 C118.8 190.2 120.0 358.2 121.4 376.4 C122.9 394.6 124.2 286.8 125.4 295.0 C126.6 303.3 127.1 445.2 128.6 426.0 C130.0 406.8 132.4 179.0 134.1 180.0 C135.8 181.0 137.2 420.4 138.9 432.0 C140.5 443.5 142.5 256.7 144.0 249.4 C145.6 242.1 146.4 393.9 148.0 388.3 C149.7 382.7 152.3 214.7 154.0 215.7 C155.6 216.7 156.2 394.9 157.9 394.3 C159.7 393.6 162.4 221.6 164.3 211.7 C166.1 201.8 167.5 335.4 169.0 334.7 C170.6 334.1 172.4 204.1 173.8 207.7 C175.3 211.4 176.5 339.0 177.8 356.6 C179.1 374.1 180.7 307.3 181.7 312.9 C182.8 318.5 182.9 406.2 184.1 390.3 C185.3 374.4 187.4 223.9 188.9 217.7 C190.3 211.4 191.3 350.6 192.9 352.6 C194.4 354.6 196.4 236.8 198.0 229.6 C199.7 222.3 201.0 310.6 202.8 308.9 C204.6 307.3 207.1 219.7 208.7 219.7 C210.4 219.7 211.2 283.8 212.7 308.9 C214.2 334.1 215.9 376.1 217.5 370.4 C219.0 364.8 220.6 272.2 221.8 275.2 C223.1 278.2 223.7 395.2 225.0 388.3 C226.3 381.4 228.4 244.8 229.8 233.5 C231.1 222.3 231.8 316.2 232.9 320.8 C234.1 325.5 235.4 258.0 236.5 261.3 C237.6 264.6 238.7 336.7 239.7 340.7 C240.7 344.7 242.0 294.4 242.5 285.1" fill="none" stroke="#f98316" stroke-width="2"/><path d="M61.9 128.4 C62.6 131.0 64.4 139.6 65.9 144.3 C67.3 148.9 69.2 151.2 70.6 156.2 C72.1 161.1 73.1 168.7 74.6 174.0 C76.1 179.3 77.9 182.0 79.8 187.9 C81.6 193.9 83.7 203.4 85.7 209.7 C87.7 216.0 89.7 221.0 91.7 225.6 C93.7 230.2 95.8 234.2 97.6 237.5 C99.5 240.8 100.8 239.8 102.8 245.4 C104.8 251.1 107.2 266.3 109.5 271.2 C111.8 276.2 114.0 272.2 116.7 275.2 C119.3 278.2 122.9 284.1 125.4 289.1 C127.8 294.1 129.4 302.3 131.3 305.0 C133.3 307.6 135.3 303.3 137.3 305.0 C139.3 306.6 141.4 313.6 143.3 314.9 C145.1 316.2 146.6 312.2 148.4 312.9 C150.2 313.6 151.5 317.2 154.0 318.9 C156.4 320.5 160.6 324.8 163.1 322.8 C165.6 320.8 167.4 308.9 169.0 307.0 C170.7 305.0 171.6 312.9 173.0 310.9 C174.5 308.9 175.8 296.7 177.8 295.0 C179.8 293.4 182.4 300.3 184.9 301.0 C187.4 301.7 190.5 300.3 192.9 299.0 C195.2 297.7 196.7 293.7 198.8 293.1 C200.9 292.4 203.6 295.4 205.6 295.0 C207.5 294.7 208.9 291.5 210.7 291.1 C212.6 290.6 214.6 292.6 216.7 292.3 C218.8 291.9 221.4 288.0 223.4 289.1 C225.4 290.2 226.7 298.0 228.6 299.0 C230.4 300.0 232.2 294.7 234.5 295.0 C236.8 295.4 241.1 300.0 242.5 301.0" fill="none" stroke="#9449b0" stroke-width="1.6"/><rect x="60.5" y="25.5" width="182" height="44" fill="#fff" stroke="#777" stroke-width="1"/><line x1="66" y1="37" x2="87" y2="37" stroke="#9449b0" stroke-width="1.8"/><text x="91" y="42.5" font-family="Liberation Sans" font-weight="bold" font-size="16.5" fill="#111">1_efficiency-avg(-)</text><line x1="66" y1="57" x2="87" y2="57" stroke="#f98316" stroke-width="1.8"/><text x="91" y="62.5" font-family="Liberation Sans" font-weight="bold" font-size="16.5" fill="#111">1_efficiency(-)</text></svg>
<div class="t" style="left:1816px;top:125px;height:18px;line-height:18px;font-size:13.4px">HTMLView1</div>
<div style="left:1895px;top:122px;width:23px;height:22px;border:1px solid #c4c0bb;border-radius:3px;background:linear-gradient(#fbfaf9,#eeeae6)"></div>
<div style="left:1922px;top:122px;width:23px;height:22px;border:1px solid #c4c0bb;border-radius:3px;background:linear-gradient(#fbfaf9,#eeeae6)"></div>
<div style="left:1949px;top:122px;width:23px;height:22px;border:1px solid #c4c0bb;border-radius:3px;background:linear-gradient(#fbfaf9,#eeeae6)"></div>
<div style="left:1976px;top:122px;width:23px;height:22px;border:1px solid #c4c0bb;border-radius:3px;background:linear-gradient(#fbfaf9,#eeeae6)"></div>
<svg style="left:1900px;top:127px;" width="14" height="14" viewBox="0 0 14 14"><rect x="0.5" y="0.5" width="13" height="13" fill="#c9d3ef" stroke="#8f8f8f" stroke-width="1"/><path d="M7 0 L7 14" stroke="#8f8f8f" stroke-width="1.2"/></svg>
<svg style="left:1927px;top:127px;" width="14" height="14" viewBox="0 0 14 14"><rect x="0.5" y="0.5" width="13" height="13" fill="#c9d3ef" stroke="#8f8f8f" stroke-width="1"/><path d="M0 7 L14 7" stroke="#8f8f8f" stroke-width="1.2"/></svg>
<svg style="left:1955px;top:128px;" width="12" height="12" viewBox="0 0 12 12"><rect x="1.5" y="1.5" width="9" height="9" fill="none" stroke="#000" stroke-width="1.3"/><rect x="1" y="1" width="10" height="2.2" fill="#000"/></svg>
<svg style="left:1982px;top:128px;" width="13" height="13" viewBox="0 0 13 13"><rect x="0.5" y="0.5" width="11.5" height="11.5" rx="2.5" fill="none" stroke="#777" stroke-width="1"/><path d="M3.5 3.5 L9 9 M9 3.5 L3.5 9" stroke="#555" stroke-width="1.6"/></svg>
<div class="btn" style="left:1631px;top:160px;width:165px;height:20px;"></div>
<div class="t" style="left:1637px;top:160px;height:22px;line-height:22px;font-size:13.4px;left:1636px">Steady-state report (eff</div>
<svg style="left:1782px;top:168px;" width="10" height="6" viewBox="0 0 10 6"><path d="M1 1 L9 1 L5 5 Z" fill="#555"/></svg>
<div class="btn" style="left:1805px;top:160px;width:80px;height:20px;"></div>
<div class="t" style="left:1805px;top:160px;width:82px;text-align:center;height:22px;line-height:22px;font-size:13.4px">Save as PDF</div>
<div class="btn" style="left:1893px;top:160px;width:82px;height:20px;"></div>
<div class="t" style="left:1893px;top:160px;width:84px;text-align:center;height:22px;line-height:22px;font-size:13.4px">Open as PDF</div>
<svg style="left:1631px;top:188px;" width="345" height="360" viewBox="0 0 345 360"><defs><linearGradient id="hbg" x1="0" y1="0" x2="1" y2="1"><stop offset="0" stop-color="#1c2330"/><stop offset="1" stop-color="#1d232d"/></linearGradient></defs><rect width="345" height="360" fill="url(#hbg)"/><path d="M0 264 L97 360 L0 360 Z" fill="#262c32"/><path d="M98.0 99.0 C124.0 74.0 159.0 74.0 175.0 99.0" fill="none" stroke="#e42b2b" stroke-width="3.8" stroke-linecap="round"/><path d="M167.0 96.7 L176.0 101.0 L176.8 91.0" fill="none" stroke="#e42b2b" stroke-width="3.6" stroke-linejoin="miter" stroke-linecap="butt"/><path d="M140.0 99.0 C166.0 74.0 201.0 74.0 217.0 99.0" fill="none" stroke="#f3a12a" stroke-width="3.8" stroke-linecap="round"/><path d="M209.0 96.7 L218.0 101.0 L218.8 91.0" fill="none" stroke="#f3a12a" stroke-width="3.6" stroke-linejoin="miter" stroke-linecap="butt"/><path d="M182.0 109.0 C204.0 132.0 239.0 132.0 258.0 108.0" fill="none" stroke="#6dbb3f" stroke-width="3.8" stroke-linecap="round"/><path d="M258.9 116.0 L259.0 106.0 L249.6 109.5" fill="none" stroke="#6dbb3f" stroke-width="3.6" stroke-linejoin="miter" stroke-linecap="butt"/><path d="M225.0 109.0 C247.0 132.0 282.0 132.0 302.0 108.0" fill="none" stroke="#2a9ad8" stroke-width="3.8" stroke-linecap="round"/><path d="M302.9 116.0 L303.0 106.0 L293.6 109.5" fill="none" stroke="#2a9ad8" stroke-width="3.6" stroke-linejoin="miter" stroke-linecap="butt"/><text transform="translate(43,163) scale(0.86,1)" font-family="Liberation Sans" font-weight="bold" font-style="italic" font-size="68" fill="#fff">CFD</text><text transform="translate(166,163) scale(0.89,1)" font-family="Liberation Sans" font-style="italic" font-size="46" fill="#fff" stroke="#1d232b" stroke-width="1.6">support</text><text x="172.5" y="219.5" text-anchor="middle" font-family="Liberation Sans" font-size="27.5" fill="#fff">Hi, this is steady-state</text><text x="172.5" y="256.6" text-anchor="middle" font-family="Liberation Sans" font-size="27.5" fill="#fff">CFD simulation report</text><text x="172.5" y="293.7" text-anchor="middle" font-family="Liberation Sans" font-size="27.5" fill="#fff">of:</text><text x="172.5" y="330.8" text-anchor="middle" font-family="Liberation Sans" font-size="27.5" fill="#fff">axial-fan-stage</text><circle cx="161" cy="362" r="4" fill="none" stroke="#aaa" stroke-width="1"/></svg>
<div style="left:1976px;top:188px;width:14px;height:360px;background:#e3dfdb"></div>
<div style="left:1976px;top:188px;width:14px;height:14px;background:#f4f2f0"></div>
<svg style="left:1978px;top:190px;" width="10" height="10" viewBox="0 0 10 10"><path d="M1 7 L5 3 L9 7 Z" fill="#333"/></svg>
<div style="left:1976px;top:202px;width:14px;height:27px;background:linear-gradient(90deg,#fdfcfb,#f0edea);border:1px solid #cfcbc6;box-sizing:border-box"></div>
<div style="left:1976px;top:534px;width:14px;height:14px;background:#f4f2f0"></div>
<svg style="left:1978px;top:536px;" width="10" height="10" viewBox="0 0 10 10"><path d="M1 3 L5 7 L9 3 Z" fill="#333"/></svg>
<div style="left:1631px;top:548px;width:345px;height:14px;background:#e3dfdb"></div>
<div style="left:1631px;top:548px;width:14px;height:14px;background:#f4f2f0"></div>
<svg style="left:1633px;top:550px;" width="10" height="10" viewBox="0 0 10 10"><path d="M7 1 L3 5 L7 9 Z" fill="#333"/></svg>
<div style="left:1645px;top:548px;width:203px;height:14px;background:linear-gradient(#fdfcfb,#f0edea);border:1px solid #cfcbc6;box-sizing:border-box"></div>
<div style="left:1962px;top:548px;width:14px;height:14px;background:#f4f2f0"></div>
<svg style="left:1964px;top:550px;" width="10" height="10" viewBox="0 0 10 10"><path d="M3 1 L7 5 L3 9 Z" fill="#333"/></svg>
<div style="left:1976px;top:548px;width:14px;height:14px;background:#efebe7"></div>
<div class="t" style="left:1807px;top:580px;height:18px;line-height:18px;font-size:13.4px;font-weight:bold;text-decoration:underline">HTMLView3</div>
<div style="left:1895px;top:578px;width:23px;height:22px;border:1px solid #c4c0bb;border-radius:3px;background:linear-gradient(#fbfaf9,#eeeae6)"></div>
<div style="left:1922px;top:578px;width:23px;height:22px;border:1px solid #c4c0bb;border-radius:3px;background:linear-gradient(#fbfaf9,#eeeae6)"></div>
<div style="left:1949px;top:578px;width:23px;height:22px;border:1px solid #c4c0bb;border-radius:3px;background:linear-gradient(#fbfaf9,#eeeae6)"></div>
<div style="left:1976px;top:578px;width:23px;height:22px;border:1px solid #c4c0bb;border-radius:3px;background:linear-gradient(#fbfaf9,#eeeae6)"></div>
<svg style="left:1900px;top:583px;" width="14" height="14" viewBox="0 0 14 14"><rect x="0.5" y="0.5" width="13" height="13" fill="#c9d3ef" stroke="#8f8f8f" stroke-width="1"/><path d="M7 0 L7 14" stroke="#8f8f8f" stroke-width="1.2"/></svg>
<svg style="left:1927px;top:583px;" width="14" height="14" viewBox="0 0 14 14"><rect x="0.5" y="0.5" width="13" height="13" fill="#c9d3ef" stroke="#8f8f8f" stroke-width="1"/><path d="M0 7 L14 7" stroke="#8f8f8f" stroke-width="1.2"/></svg>
<svg style="left:1955px;top:584px;" width="12" height="12" viewBox="0 0 12 12"><rect x="1.5" y="1.5" width="9" height="9" fill="none" stroke="#000" stroke-width="1.3"/><rect x="1" y="1" width="10" height="2.2" fill="#000"/></svg>
<svg style="left:1982px;top:584px;" width="13" height="13" viewBox="0 0 13 13"><rect x="0.5" y="0.5" width="11.5" height="11.5" rx="2.5" fill="none" stroke="#777" stroke-width="1"/><path d="M3.5 3.5 L9 9 M9 3.5 L3.5 9" stroke="#555" stroke-width="1.6"/></svg>
<div style="left:1619px;top:604px;width:383px;height:325px;border:2px solid #0a0aff;box-sizing:border-box"></div>
<div class="btn" style="left:1631px;top:616px;width:165px;height:20px;"></div>
<div class="t" style="left:1637px;top:616px;height:22px;line-height:22px;font-size:13.4px;left:1636px">TFEA report</div>
<svg style="left:1782px;top:624px;" width="10" height="6" viewBox="0 0 10 6"><path d="M1 1 L9 1 L5 5 Z" fill="#555"/></svg>
<div class="btn" style="left:1805px;top:616px;width:80px;height:20px;"></div>
<div class="t" style="left:1805px;top:616px;width:82px;text-align:center;height:22px;line-height:22px;font-size:13.4px">Save as PDF</div>
<div class="btn" style="left:1893px;top:616px;width:82px;height:20px;"></div>
<div class="t" style="left:1893px;top:616px;width:84px;text-align:center;height:22px;line-height:22px;font-size:13.4px">Open as PDF</div>
<svg style="left:1631px;top:643px;" width="345" height="260" viewBox="0 0 345 260"><rect width="345" height="260" fill="#1c232e"/><defs><linearGradient id="h3a" x1="0" y1="1" x2="0.6" y2="0.2"><stop offset="0" stop-color="#3a4046"/><stop offset="1" stop-color="#22282f"/></linearGradient><linearGradient id="h3b" x1="0" y1="1" x2="0.5" y2="0.3"><stop offset="0" stop-color="#5a5f64"/><stop offset="1" stop-color="#2e343a"/></linearGradient></defs><path d="M0 12 L17 0 L299 260 L0 260 Z" fill="url(#h3a)"/><path d="M0 152 L129 260 L0 260 Z" fill="url(#h3b)"/><text x="172" y="2" text-anchor="middle" font-family="Liberation Sans" font-size="27.5" fill="#fff">report of:</text><text x="172" y="39" text-anchor="middle" font-family="Liberation Sans" font-size="27.5" fill="#fff">axial-fan-stage</text><text x="172" y="82" text-anchor="middle" font-family="Liberation Sans" font-size="16" fill="#c8ccd0">Created by TFEA 20.09 on Fri Nov 13</text><line x1="121" y1="87" x2="161" y2="87" stroke="#aab" stroke-width="1" stroke-dasharray="1 1"/><text x="172" y="108" text-anchor="middle" font-family="Liberation Sans" font-size="16" fill="#c8ccd0">14:25:23 2020</text><defs><linearGradient id="shp" x1="0" y1="1" x2="1" y2="0"><stop offset="0" stop-color="#666869"/><stop offset="1" stop-color="#939596"/></linearGradient></defs><path d="M114.0 186.0 L201.0 125.0 C214.0 147.0 234.0 182.0 256.0 197.0 L132.0 244.0 C121.0 227.0 115.0 207.0 114.0 186.0 Z" fill="url(#shp)"/><ellipse cx="225" cy="166" rx="17" ry="27" transform="rotate(-28 225 166)" fill="#b3b3ab" stroke="#8e8e88" stroke-width="1"/><path d="M207.0 147.0 L243.0 185.0" stroke="#8a8a84" stroke-width="2.5"/><path d="M29.0 250.0 L29.0 244.0 M26.0 249.0 L34.0 249.0" stroke="#4a4" stroke-width="1"/></svg>
<div style="left:1976px;top:643px;width:14px;height:260px;background:#e3dfdb"></div>
<div style="left:1976px;top:643px;width:14px;height:14px;background:#f4f2f0"></div>
<svg style="left:1978px;top:645px;" width="10" height="10" viewBox="0 0 10 10"><path d="M1 7 L5 3 L9 7 Z" fill="#333"/></svg>
<div style="left:1976px;top:657px;width:14px;height:30px;background:linear-gradient(90deg,#fdfcfb,#f0edea);border:1px solid #cfcbc6;box-sizing:border-box"></div>
<div style="left:1976px;top:889px;width:14px;height:14px;background:#f4f2f0"></div>
<svg style="left:1978px;top:891px;" width="10" height="10" viewBox="0 0 10 10"><path d="M1 3 L5 7 L9 3 Z" fill="#333"/></svg>
<div style="left:1631px;top:903px;width:345px;height:14px;background:#e3dfdb"></div>
<div style="left:1631px;top:903px;width:14px;height:14px;background:#f4f2f0"></div>
<svg style="left:1633px;top:905px;" width="10" height="10" viewBox="0 0 10 10"><path d="M7 1 L3 5 L7 9 Z" fill="#333"/></svg>
<div style="left:1645px;top:903px;width:121px;height:14px;background:linear-gradient(#fdfcfb,#f0edea);border:1px solid #cfcbc6;box-sizing:border-box"></div>
<div style="left:1962px;top:903px;width:14px;height:14px;background:#f4f2f0"></div>
<svg style="left:1964px;top:905px;" width="10" height="10" viewBox="0 0 10 10"><path d="M3 1 L7 5 L3 9 Z" fill="#333"/></svg>
<div style="left:1976px;top:903px;width:14px;height:14px;background:#efebe7"></div>
<div class="t" style="left:622px;top:937px;height:18px;line-height:18px;font-size:13.4px">Output Messages</div>
<svg style="left:1155px;top:940px;" width="27" height="13" viewBox="0 0 27 13"><rect x="0.5" y="0.5" width="11" height="11" rx="2" fill="none" stroke="#888" stroke-width="1"/><rect x="2.5" y="5.5" width="4.5" height="4" fill="none" stroke="#666" stroke-width="0.9"/><path d="M4.5 5.5 L4.5 2.5 L9.5 2.5 L9.5 7 L7 7" fill="none" stroke="#666" stroke-width="0.9"/><rect x="14.5" y="0.5" width="11" height="11" rx="2" fill="none" stroke="#777" stroke-width="1"/><path d="M17 3 L23 9 M23 3 L17 9" stroke="#555" stroke-width="1.8"/></svg>
<div style="left:627px;top:965px;width:546px;height:70px;background:#fff;border:1px solid #b9b5b0;box-sizing:border-box"></div>
<div style="left:628px;top:980px;width:530px;height:14px;background:#f4f2f0"></div>
<svg style="left:665px;top:966px;" width="10" height="12" viewBox="0 0 10 12"><path d="M2 1 L7 6 L2 11 Z" fill="#444"/></svg>
<svg style="left:663px;top:981px;" width="12" height="10" viewBox="0 0 12 10"><path d="M1 2 L11 2 L6 7 Z" fill="#444"/></svg>
<div class="t" style="left:683px;top:965px;height:15px;line-height:15px;font-size:13.4px;color:#139913">Using CAE Processor library version 20.09v2</div>
<div class="t" style="left:683px;top:979px;height:15px;line-height:15px;font-size:13.4px;color:#139913">The license is issued as&nbsp; Perpetual</div>
<div class="t" style="left:703px;top:993px;height:15px;line-height:15px;font-size:13.4px;color:#139913">The license is issued as&nbsp; Perpetual</div>
<div class="t" style="left:703px;top:1007px;height:15px;line-height:15px;font-size:13.4px;color:#139913">The license is issued for CFD SUPPORT</div>
<div class="t" style="left:703px;top:1021px;height:13px;line-height:13px;font-size:13.4px;color:#139913">The license is issued for Testing License</div>
<div style="left:1158px;top:966px;width:14px;height:68px;background:#e9e5e1"></div>
<svg style="left:1160px;top:967px;" width="10" height="10" viewBox="0 0 10 10"><path d="M1 7 L5 3 L9 7 Z" fill="#333"/></svg>
<div style="left:1159px;top:1006px;width:13px;height:14px;background:#d8d4d0"></div>
<svg style="left:1160px;top:1022px;" width="10" height="10" viewBox="0 0 10 10"><path d="M1 3 L5 7 L9 3 Z" fill="#333"/></svg>
<div class="inp" style="left:627px;top:1044px;width:12px;height:12px;border-radius:1px"></div>
<div class="t" style="left:646px;top:1043px;height:17px;line-height:17px;font-size:13.4px">Show full messages</div>
<div class="btn" style="left:998px;top:1042px;width:87px;height:22px;"></div>
<div class="t" style="left:998px;top:1042px;width:89px;text-align:center;height:19px;line-height:19px;font-size:13.4px">Save to File...</div>
<div class="btn" style="left:1093px;top:1042px;width:78px;height:22px;"></div>
<div class="t" style="left:1093px;top:1042px;width:80px;text-align:center;height:19px;line-height:19px;font-size:13.4px">Clear</div>
<div style="left:1300px;top:932px;width:1px;height:1px;background:#b8b4ae"></div>
<div style="left:1303px;top:932px;width:1px;height:1px;background:#b8b4ae"></div>
<div style="left:1306px;top:932px;width:1px;height:1px;background:#b8b4ae"></div>
<div style="left:1309px;top:932px;width:1px;height:1px;background:#b8b4ae"></div>
<div style="left:1312px;top:932px;width:1px;height:1px;background:#b8b4ae"></div>
<div style="left:1315px;top:932px;width:1px;height:1px;background:#b8b4ae"></div>
<div style="left:1183px;top:1000px;width:1px;height:1px;background:#b8b4ae"></div>
<div style="left:1186px;top:1000px;width:1px;height:1px;background:#b8b4ae"></div>
<div style="left:1183px;top:1003px;width:1px;height:1px;background:#b8b4ae"></div>
<div style="left:1186px;top:1003px;width:1px;height:1px;background:#b8b4ae"></div>
<div style="left:1183px;top:1006px;width:1px;height:1px;background:#b8b4ae"></div>
<div style="left:1186px;top:1006px;width:1px;height:1px;background:#b8b4ae"></div>
<div style="left:1183px;top:1009px;width:1px;height:1px;background:#b8b4ae"></div>
<div style="left:1186px;top:1009px;width:1px;height:1px;background:#b8b4ae"></div>
<div style="left:1183px;top:1012px;width:1px;height:1px;background:#b8b4ae"></div>
<div style="left:1186px;top:1012px;width:1px;height:1px;background:#b8b4ae"></div>
<div class="t" style="left:1191px;top:937px;height:18px;line-height:18px;font-size:13.4px">TCAE Output</div>
<svg style="left:1977px;top:940px;" width="27" height="13" viewBox="0 0 27 13"><rect x="0.5" y="0.5" width="11" height="11" rx="2" fill="none" stroke="#888" stroke-width="1"/><rect x="2.5" y="5.5" width="4.5" height="4" fill="none" stroke="#666" stroke-width="0.9"/><path d="M4.5 5.5 L4.5 2.5 L9.5 2.5 L9.5 7 L7 7" fill="none" stroke="#666" stroke-width="0.9"/><rect x="14.5" y="0.5" width="11" height="11" rx="2" fill="none" stroke="#777" stroke-width="1"/><path d="M17 3 L23 9 M23 3 L17 9" stroke="#555" stroke-width="1.8"/></svg>
<div class="btn" style="left:1197px;top:965px;width:193px;height:20px;"></div>
<div class="t" style="left:1203px;top:965px;height:22px;line-height:22px;font-size:13.4px">axial-fan-stage.tcae</div>
<svg style="left:1376px;top:973px;" width="10" height="6" viewBox="0 0 10 6"><path d="M1 1 L9 1 L5 5 Z" fill="#555"/></svg>
<div class="btn" style="left:1398px;top:965px;width:193px;height:20px;"></div>
<div class="t" style="left:1404px;top:965px;height:22px;line-height:22px;font-size:13.4px">Solver output</div>
<svg style="left:1577px;top:973px;" width="10" height="6" viewBox="0 0 10 6"><path d="M1 1 L9 1 L5 5 Z" fill="#555"/></svg>
<div class="btn" style="left:1599px;top:965px;width:194px;height:20px;"></div>
<div class="t" style="left:1599px;top:965px;width:196px;text-align:center;height:22px;line-height:22px;font-size:13.4px">Save output to file...</div>
<div class="btn" style="left:1800px;top:965px;width:194px;height:20px;"></div>
<div class="t" style="left:1800px;top:965px;width:196px;text-align:center;height:22px;line-height:22px;font-size:13.4px">Clean window</div>
<div style="left:1197px;top:993px;width:799px;height:70px;background:#fff;border:1px solid #b9b5b0;box-sizing:border-box"></div>
<div class="t" style="left:1202px;top:995px;height:15px;line-height:15px;font-family:'Liberation Mono',monospace;font-size:12px;color:#505050">axial-fan-stage.FREQ03.vtu</div>
<div class="t" style="left:1202px;top:1010px;height:15px;line-height:15px;font-family:'Liberation Mono',monospace;font-size:12px;color:#505050">Step 4, time 1875.16873, Displacement, 3 components, 195293 values</div>
<div class="t" style="left:1202px;top:1025px;height:15px;line-height:15px;font-family:'Liberation Mono',monospace;font-size:12px;color:#505050">Step 4, time 1875.16873, Stress, 10 components, 195293 values</div>
<div class="t" style="left:1202px;top:1040px;height:15px;line-height:15px;font-family:'Liberation Mono',monospace;font-size:12px;color:#505050">END</div>
<div style="left:1980px;top:994px;width:15px;height:65px;background:#e9e5e1"></div>
<svg style="left:1982px;top:996px;" width="10" height="10" viewBox="0 0 10 10"><path d="M1 7 L5 3 L9 7 Z" fill="#333"/></svg>
<div style="left:1981px;top:1008px;width:13px;height:14px;background:#dedad6;border:1px solid #d0ccc7;box-sizing:border-box"></div>
<svg style="left:1982px;top:1048px;" width="10" height="10" viewBox="0 0 10 10"><path d="M1 3 L5 7 L9 3 Z" fill="#333"/></svg>
<div style="left:618px;top:121px;width:1px;height:809px;background:#bdb9b4"></div>
<div style="left:618px;top:929px;width:1001px;height:1px;background:#bdb9b4"></div>
<div style="left:1452px;top:879px;width:1px;height:4px;background:#666"></div>
<div style="left:1515px;top:879px;width:1px;height:4px;background:#666"></div>
<div style="left:1575px;top:879px;width:1px;height:4px;background:#666"></div>
<div style="left:1456px;top:347px;width:1px;height:4px;background:#666"></div>
<div style="left:1574px;top:347px;width:1px;height:4px;background:#666"></div>
</body></html>
